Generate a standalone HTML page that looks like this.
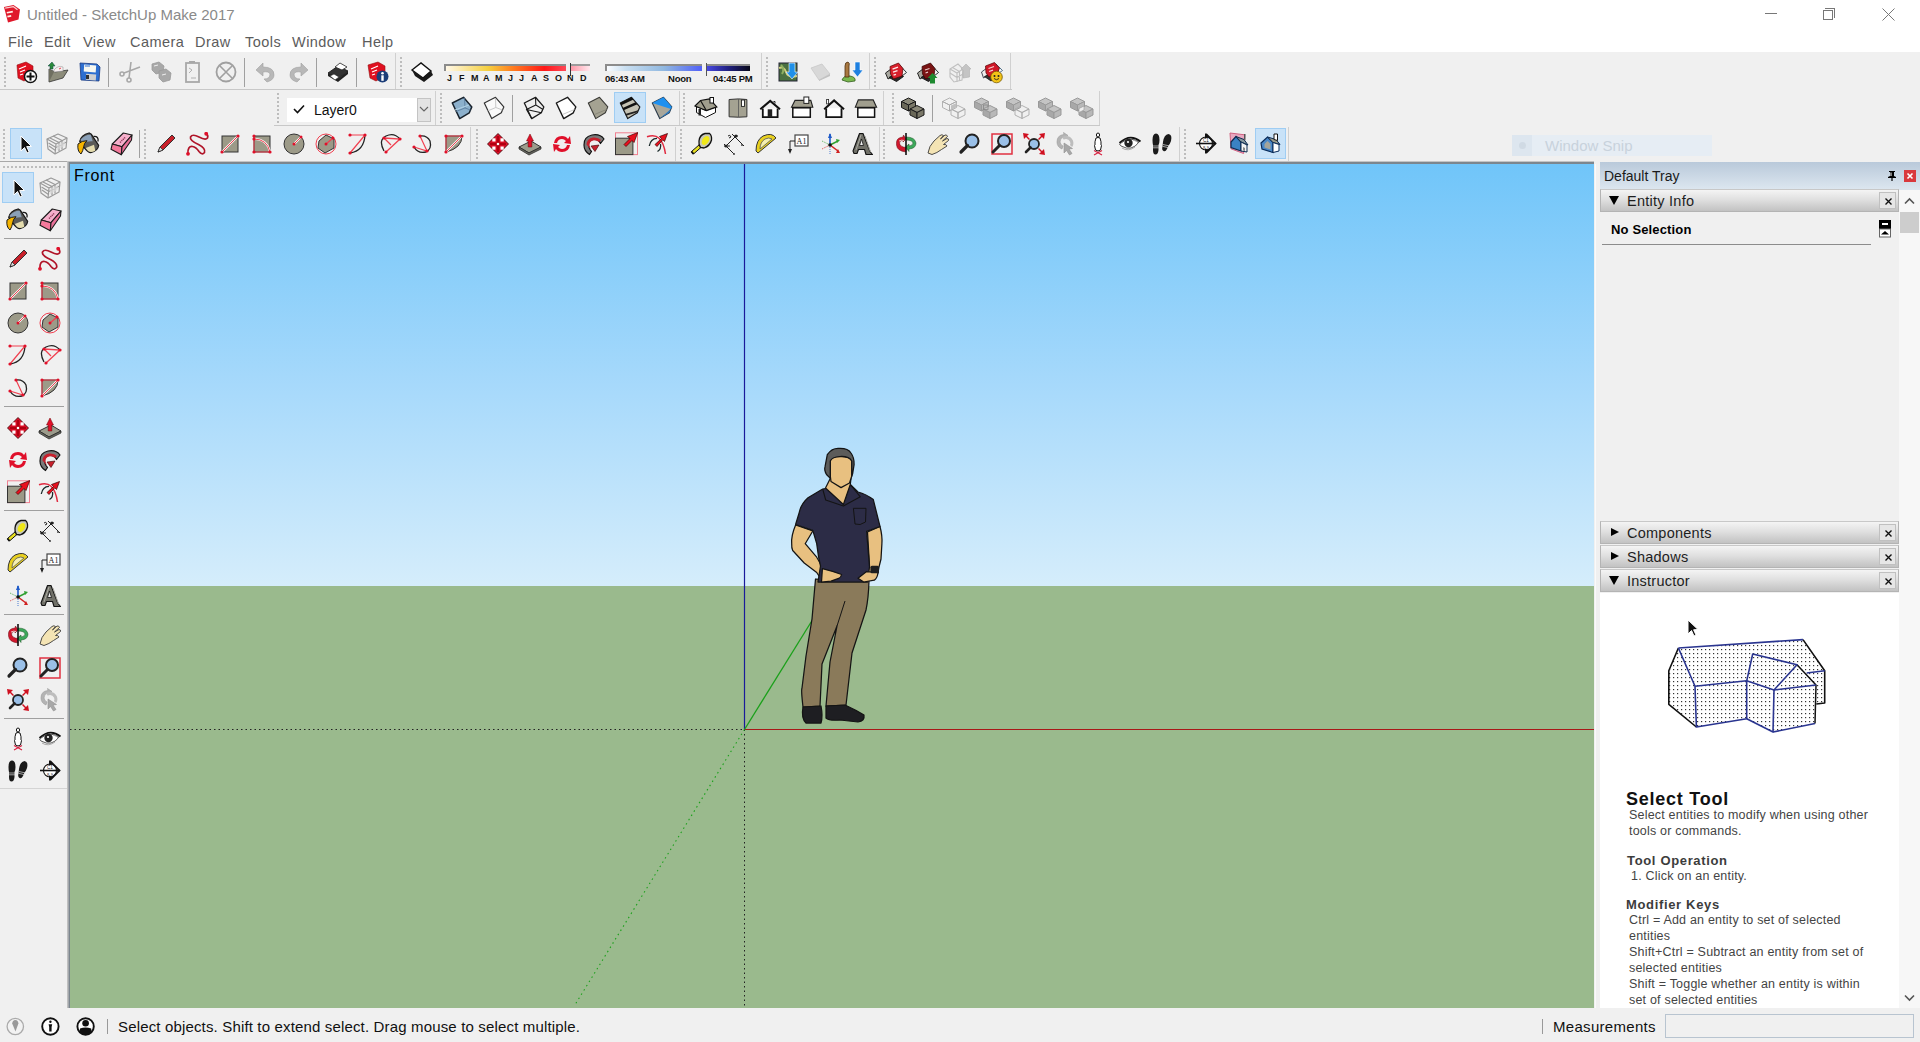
<!DOCTYPE html>
<html><head><meta charset="utf-8">
<style>
*{margin:0;padding:0;box-sizing:border-box}
html,body{width:1920px;height:1042px;overflow:hidden;background:#f0f0f0;font-family:"Liberation Sans",sans-serif;position:relative}
.a{position:absolute}
.t{position:absolute;white-space:nowrap;line-height:1}
.menu{font-size:14.5px;letter-spacing:0.45px;color:#5c5c5c;top:35px}
.ph{position:absolute;left:1600px;width:299px;height:23px;margin-top:-1px;background:linear-gradient(#f4f4f4,#e0e0e0 45%,#c2c2c2);border:1px solid #b4b4b4;border-top-color:#c8c8c8}
.ph .tri{position:absolute;left:8px;top:6px;width:0;height:0}
.ph .down{border-left:5px solid transparent;border-right:5px solid transparent;border-top:9px solid #000}
.ph .rt{left:10px;top:6px;border-top:4.5px solid transparent;border-bottom:4.5px solid transparent;border-left:8px solid #000}
.ph .lbl{position:absolute;left:26px;top:4px;font-size:14.5px;letter-spacing:0.25px;color:#1e1e1e;line-height:1}
.ph .x{position:absolute;left:278px;top:2px;width:17px;height:17px;border:1px solid #c0c0c0;background:#e6e6e6}
.selx{}
.ins{position:absolute;white-space:nowrap;line-height:1;font-size:12.5px;letter-spacing:0.2px;color:#444}
.insh{position:absolute;white-space:nowrap;line-height:1;font-size:13px;letter-spacing:0.66px;font-weight:bold;color:#3c3c3c}
</style></head><body>
<div class="a" style="left:0;top:0;width:1920px;height:52px;background:#fff"></div>
<svg class="a" style="left:3px;top:4px" width="18" height="20" viewBox="0 0 18 20"><path d="M1 3 L10.5 1 L17 5.5 L15.5 15.5 L5 18.5 Z" fill="#e0182a"/><path d="M2.2 4.2 L10.3 2.6 L14.5 5.8" fill="none" stroke="#f8d0d0" stroke-width="1.3"/><path d="M3.8 8.8 L9.8 7.6 M4.4 12.6 L8.2 11.9" stroke="#fff0e8" stroke-width="1.6"/></svg>
<div class="t" style="left:27px;top:7px;font-size:15px;color:#8a8a8a">Untitled - SketchUp Make 2017</div>
<div class="a" style="left:1765px;top:13px;width:12px;height:1px;background:#777"></div>
<div class="a" style="left:1823px;top:10px;width:10px;height:10px;border:1px solid #777"></div>
<div class="a" style="left:1825px;top:8px;width:10px;height:10px;border-top:1px solid #777;border-right:1px solid #777"></div>
<svg class="a" style="left:1882px;top:8px" width="13" height="13"><path d="M0.5 0.5L12.5 12.5M12.5 0.5L0.5 12.5" stroke="#777" stroke-width="1"/></svg>
<div class="t menu" style="left:8px">File</div>
<div class="t menu" style="left:44px">Edit</div>
<div class="t menu" style="left:83px">View</div>
<div class="t menu" style="left:130px">Camera</div>
<div class="t menu" style="left:195px">Draw</div>
<div class="t menu" style="left:245px">Tools</div>
<div class="t menu" style="left:292px">Window</div>
<div class="t menu" style="left:362px">Help</div>

<div class="a" style="left:4px;top:57px;width:2px;height:31px;background:repeating-linear-gradient(#bdbdbd 0 2px,transparent 2px 4px)"></div>
<svg class="a" style="left:14.0px;top:60.0px" width="24" height="24" viewBox="0 0 24 24"><path d="M3 5 L12 2 L19 6 L19 16 L10 21 L4 18 Z" fill="#e01020" stroke="#901010" stroke-width="0.6"/><path d="M5 9 L12 6 M6 12 L11 10 M6 15 L9 14" stroke="#fff" stroke-width="1.3"/><circle cx="16.5" cy="16.5" r="6" fill="#fff" stroke="#111" stroke-width="1.5"/><path d="M16.5 12.5 L16.5 20.5 M12.5 16.5 L20.5 16.5" stroke="#111" stroke-width="2"/></svg>
<svg class="a" style="left:46.0px;top:60.0px" width="24" height="24" viewBox="0 0 24 24"><path d="M3 9 L3 22 L17 18 L22 10 L9 12 Z" fill="#8c8c7a" stroke="#333" stroke-width="0.8"/><path d="M3 9 L3 22 L8 12" fill="#6f6f60"/><path d="M8 10 Q12 5 17 7 L17 11 L8 12Z" fill="#f8f0f0" stroke="#999" stroke-width="0.6"/><path d="M13 9 L15 8" stroke="#e04050" stroke-width="1"/><path d="M2 6 L6 2 L9 6 L7 6 L7 9 L4 9 L4 6 Z" fill="#2a8a3a" stroke="#144" stroke-width="0.5"/></svg>
<svg class="a" style="left:78.0px;top:60.0px" width="24" height="24" viewBox="0 0 24 24"><path d="M2 3 L19 4 L22 7 L21 21 L3 20 Z" fill="#2e6fd0" stroke="#1a3a80" stroke-width="0.8"/><rect x="6" y="5" width="12" height="7" fill="#f8f8f0" transform="rotate(4 12 8)"/><path d="M7 6 L12 6" stroke="#2e6fd0" stroke-width="1"/><rect x="8" y="14" width="10" height="6" fill="#d0d0d0" transform="rotate(4 12 17)"/><rect x="8" y="15" width="3" height="4" fill="#333"/></svg>
<div class="a" style="left:108px;top:58px;width:1px;height:29px;background:#a0a0a0"></div>
<svg class="a" style="left:118.0px;top:60.0px" width="24" height="24" viewBox="0 0 24 24"><g stroke="#a8a8a8" stroke-width="1.6" fill="none"><circle cx="4" cy="14" r="2"/><circle cx="11" cy="20" r="2"/><path d="M6 13 L22 7 M11 18 L13 2"/></g></svg>
<svg class="a" style="left:150.0px;top:60.0px" width="24" height="24" viewBox="0 0 24 24"><path d="M2 4 L9 2 L14 6 L13 12 L6 14 L2 10Z" fill="#a8a8a8" stroke="#999" stroke-width="0.8"/><path d="M9 11 L16 9 L21 13 L20 20 L13 22 L9 18Z" fill="#a8a8a8" stroke="#999" stroke-width="0.8"/><path d="M4 6 L8 5 M12 15 L16 14" stroke="#eee" stroke-width="1"/></svg>
<svg class="a" style="left:181.0px;top:60.0px" width="24" height="24" viewBox="0 0 24 24"><rect x="5" y="3" width="13" height="19" fill="#f0f0f0" stroke="#a8a8a8" stroke-width="1.8"/><path d="M8 2 L14 2" stroke="#a8a8a8" stroke-width="2"/><path d="M8 8 L11 10 L8 13" fill="none" stroke="#b0b0b0" stroke-width="1"/><path d="M10 18 L15 18" stroke="#b0b0b0" stroke-width="1"/></svg>
<svg class="a" style="left:214.0px;top:60.0px" width="24" height="24" viewBox="0 0 24 24"><circle cx="12" cy="12" r="9.5" fill="none" stroke="#a0a0a0" stroke-width="1.8"/><path d="M5.5 5.5 L18.5 18.5 M18.5 5.5 L5.5 18.5" stroke="#a0a0a0" stroke-width="1.6"/></svg>
<div class="a" style="left:244px;top:58px;width:1px;height:29px;background:#a0a0a0"></div>
<svg class="a" style="left:254.0px;top:60.0px" width="24" height="24" viewBox="0 0 24 24"><path d="M2 10 L9 3 L9 7 Q20 7 20 15 Q20 20 13 22 L10 19 Q16 19 16 14 Q15 11 9 12 L9 16 Z" fill="#b8b8b8" stroke="#a0a0a0" stroke-width="0.6"/></svg>
<svg class="a" style="left:286.0px;top:60.0px" width="24" height="24" viewBox="0 0 24 24"><path d="M22 10 L15 3 L15 7 Q4 7 4 15 Q4 20 11 22 L14 19 Q8 19 8 14 Q9 11 15 12 L15 16 Z" fill="#b8b8b8" stroke="#a0a0a0" stroke-width="0.6"/></svg>
<div class="a" style="left:316px;top:58px;width:1px;height:29px;background:#a0a0a0"></div>
<svg class="a" style="left:326.0px;top:60.0px" width="24" height="24" viewBox="0 0 24 24"><path d="M2 13 L12 6 L22 11 L12 19 Z" fill="#333" stroke="#111" stroke-width="0.8"/><path d="M2 13 L2 16 L12 22 L22 14 L22 11 L12 19Z" fill="#222"/><path d="M9 7 L14 3 L21 7 L16 10 Z" fill="#fff" stroke="#222" stroke-width="0.8"/><path d="M4 16 L8 14 L13 17 L9 20 Z" fill="#fff" stroke="#222" stroke-width="0.6"/></svg>
<div class="a" style="left:356px;top:58px;width:1px;height:29px;background:#a0a0a0"></div>
<svg class="a" style="left:366.0px;top:60.0px" width="24" height="24" viewBox="0 0 24 24"><path d="M2 5 L12 2 L19 6 L19 16 L10 21 L4 18 Z" fill="#e01020" stroke="#901010" stroke-width="0.6"/><path d="M5 9 L12 6 M6 12 L11 10 M6 15 L9 14" stroke="#fff" stroke-width="1.3"/><circle cx="16.5" cy="16.5" r="6" fill="#1c3e78"/><circle cx="16.5" cy="13.3" r="1.3" fill="#fff"/><rect x="15.3" y="15.3" width="2.4" height="5.5" fill="#fff"/></svg>
<div class="a" style="left:395px;top:53px;width:1px;height:36px;background:#d0d0d0"></div>
<div class="a" style="left:400px;top:57px;width:2px;height:31px;background:repeating-linear-gradient(#bdbdbd 0 2px,transparent 2px 4px)"></div>
<svg class="a" style="left:410.0px;top:60.0px" width="24" height="24" viewBox="0 0 24 24"><path d="M2 10 L11 3 L21 11 L13 18 Z" fill="#fff" stroke="#111" stroke-width="1.4"/><path d="M2 10 L13 18 L21 11 L23 15 L14 22 L5 16 Z" fill="#1a1a1a"/></svg>
<div class="a" style="left:444px;top:64px;width:122px;height:7px;border-top:2px solid #8c8c8c;border-left:2px solid #8c8c8c;background:linear-gradient(90deg,#fff8e8,#f5d040 35%,#ff8020 55%,#ff1818 82%,#ff4858)"></div>
<div class="a" style="left:570px;top:63px;width:1px;height:13px;background:#333"></div>
<div class="a" style="left:571px;top:64px;width:19px;height:7px;border-top:2px solid #9c9c9c;background:linear-gradient(90deg,#ff98a8,#ffe8ee)"></div>
<div class="t" style="left:447px;top:74px;font-size:9px;font-weight:bold;color:#111">J</div>
<div class="t" style="left:459px;top:74px;font-size:9px;font-weight:bold;color:#111">F</div>
<div class="t" style="left:471px;top:74px;font-size:9px;font-weight:bold;color:#111">M</div>
<div class="t" style="left:483px;top:74px;font-size:9px;font-weight:bold;color:#111">A</div>
<div class="t" style="left:495px;top:74px;font-size:9px;font-weight:bold;color:#111">M</div>
<div class="t" style="left:508px;top:74px;font-size:9px;font-weight:bold;color:#111">J</div>
<div class="t" style="left:519px;top:74px;font-size:9px;font-weight:bold;color:#111">J</div>
<div class="t" style="left:531px;top:74px;font-size:9px;font-weight:bold;color:#111">A</div>
<div class="t" style="left:543px;top:74px;font-size:9px;font-weight:bold;color:#111">S</div>
<div class="t" style="left:555px;top:74px;font-size:9px;font-weight:bold;color:#111">O</div>
<div class="t" style="left:567px;top:74px;font-size:9px;font-weight:bold;color:#111">N</div>
<div class="t" style="left:580px;top:74px;font-size:9px;font-weight:bold;color:#111">D</div>
<div class="a" style="left:605px;top:64px;width:97px;height:7px;border-top:2px solid #8c8c8c;border-left:2px solid #8c8c8c;background:linear-gradient(90deg,#fafcff,#c8def0 20%,#90b8e0 60%,#5060f8)"></div>
<div class="a" style="left:706px;top:63px;width:1px;height:13px;background:#555"></div>
<div class="a" style="left:707px;top:64px;width:43px;height:7px;border-top:2px solid #8c8c8c;background:linear-gradient(90deg,#4848e0,#202080 50%,#080818)"></div>
<div class="t" style="left:605px;top:74px;font-size:9.5px;font-weight:bold;letter-spacing:-0.2px;color:#111">06:43 AM</div>
<div class="t" style="left:668px;top:74px;font-size:9.5px;font-weight:bold;letter-spacing:-0.2px;color:#111">Noon</div>
<div class="t" style="left:713px;top:74px;font-size:9.5px;font-weight:bold;letter-spacing:-0.2px;color:#111">04:45 PM</div>
<div class="a" style="left:761px;top:53px;width:1px;height:36px;background:#d0d0d0"></div>
<div class="a" style="left:766px;top:57px;width:2px;height:31px;background:repeating-linear-gradient(#bdbdbd 0 2px,transparent 2px 4px)"></div>
<svg class="a" style="left:776.0px;top:60.0px" width="24" height="24" viewBox="0 0 24 24"><rect x="3" y="3" width="18" height="18" fill="#4a7040" stroke="#223" stroke-width="1"/><path d="M3 8 Q8 6 10 12 Q12 18 21 16" fill="none" stroke="#d0d080" stroke-width="2"/><path d="M5 5 Q9 9 6 14" fill="none" stroke="#90b060" stroke-width="2"/><path d="M13 3 L19 3 L19 12 L22 12 L16 19 L10 12 L13 12Z" fill="#2090e8" stroke="#fff" stroke-width="0.6"/></svg>
<svg class="a" style="left:808.0px;top:60.0px" width="24" height="24" viewBox="0 0 24 24"><path d="M3 8 L14 4 L22 14 L11 20 Z" fill="#d8d8d8" stroke="#c8c8c8" stroke-width="0.8"/><path d="M11 20 L22 14 L22 16 L11 21Z" fill="#c0c0c0"/></svg>
<svg class="a" style="left:840.0px;top:60.0px" width="24" height="24" viewBox="0 0 24 24"><path d="M2 20 Q4 15 10 16 Q16 17 15 21 L8 22 Z" fill="#7ab850" stroke="#356020" stroke-width="0.8"/><path d="M5 6 Q5 2 8 2 Q10 3 9 6 L9 17 L5 17 Z" fill="#a87840" stroke="#503010" stroke-width="0.8"/><path d="M15 2 L20 2 L20 10 L23 10 L17.5 17 L12 10 L15 10Z" fill="#1e80e0" stroke="#fff" stroke-width="0.6"/></svg>
<div class="a" style="left:869px;top:53px;width:1px;height:36px;background:#d0d0d0"></div>
<div class="a" style="left:874px;top:57px;width:2px;height:31px;background:repeating-linear-gradient(#bdbdbd 0 2px,transparent 2px 4px)"></div>
<svg class="a" style="left:884.0px;top:60.0px" width="24" height="24" viewBox="0 0 24 24"><path d="M1.5 13 L7 9 L9 16 L4 19 Z" fill="#a8a8a0" stroke="#111" stroke-width="0.9"/><path d="M15 4.5 L22.5 12.5 L18 16 Z" fill="#f4f4f4" stroke="#122" stroke-width="0.9"/><path d="M5 17.5 L12.5 21.5 L19.5 16.5 L12 13.5Z" fill="#2a2a2a" stroke="#111" stroke-width="0.9"/><path d="M6 6.5 L14.5 3 L19 8.5 L18 16 L9.5 19 L6.5 14Z" fill="#d8202c" stroke="#500" stroke-width="0.7"/><path d="M8.5 9.2 L14 7.2 M9 12.2 L13.5 10.7 M9.5 15.2 L12 14.3" stroke="#ffe8e8" stroke-width="1.4"/></svg>
<svg class="a" style="left:916.0px;top:60.0px" width="24" height="24" viewBox="0 0 24 24"><path d="M1.5 13 L7 9 L9 16 L4 19 Z" fill="#a8a8a0" stroke="#111" stroke-width="0.9"/><path d="M15 4.5 L22.5 12.5 L18 16 Z" fill="#f4f4f4" stroke="#122" stroke-width="0.9"/><path d="M5 17.5 L12.5 21.5 L19.5 16.5 L12 13.5Z" fill="#2a2a2a" stroke="#111" stroke-width="0.9"/><path d="M6 6.5 L14.5 3 L19 8.5 L18 16 L9.5 19 L6.5 14Z" fill="#7a1414" stroke="#300" stroke-width="0.7"/><path d="M9 10 L13.5 8.5 M9.5 13 L12 12.2" stroke="#e8c8c8" stroke-width="1.3"/><path d="M16.5 13 L21.5 18 L19 18 L19 23.5 L14 23.5 L14 18 L11.5 18Z" fill="#1e8a30"/></svg>
<svg class="a" style="left:948.0px;top:60.0px" width="24" height="24" viewBox="0 0 24 24"><g fill="none" stroke="#c0c0c0" stroke-width="1.1"><path d="M2 9 L10 4 L15 9 L14 20 L6 22 L2 17Z"/><path d="M2 9 L9 13 L15 9 M9 13 L9 22 M4.5 7.5 L11.5 11.5 L11.5 21 M2 13 L9 17.5 L15 14"/></g><path d="M13 9 L18 4 L23 9 L21.5 9 L21.5 17 L15 18 L15 10 Z" fill="#c4c4c4" stroke="#b0b0b0" stroke-width="0.6"/></svg>
<svg class="a" style="left:980.0px;top:60.0px" width="24" height="24" viewBox="0 0 24 24"><path d="M1.5 12 L7 8 L8.5 15 L3.5 18 Z" fill="#eee" stroke="#223" stroke-width="0.8"/><path d="M16 4 L22.5 10.5 L19 13 Z" fill="#f4f4f4" stroke="#2a5070" stroke-width="0.8"/><path d="M4.5 16.5 L11 21 L15 18 L10 14Z" fill="#333" stroke="#111" stroke-width="0.8"/><path d="M5.5 6 L14.5 2.5 L19.5 8 L17 14 L9 17 L6 13Z" fill="#d01828" stroke="#500" stroke-width="0.7"/><path d="M8.5 8.5 L14 6.5 M9 11.5 L13 10.2" stroke="#f8d0d0" stroke-width="1.3"/><circle cx="16.5" cy="17" r="5.8" fill="#f2c418" stroke="#7a5a00" stroke-width="0.8"/><circle cx="14.5" cy="16" r="1" fill="#222"/><circle cx="18.5" cy="16" r="1" fill="#222"/><path d="M14 18.5 Q16.5 21 19 18.5" fill="none" stroke="#222" stroke-width="0.9"/></svg>
<div class="a" style="left:1010px;top:53px;width:1px;height:36px;background:#d0d0d0"></div>
<div class="a" style="left:0px;top:89px;width:1012px;height:1px;background:#c8c8c8"></div>
<div class="a" style="left:277px;top:93px;width:2px;height:31px;background:repeating-linear-gradient(#bdbdbd 0 2px,transparent 2px 4px)"></div>
<div class="a" style="left:287px;top:98px;width:130px;height:24px;background:#fff"></div>
<svg class="a" style="left:293px;top:104px" width="12" height="10"><path d="M1 5 L4.5 8.5 L11 1.5" fill="none" stroke="#111" stroke-width="1.6"/></svg>
<div class="t" style="left:314px;top:103px;font-size:14px;color:#111">Layer0</div>
<div class="a" style="left:417px;top:98px;width:14px;height:24px;background:#e4e4e4;border:1px solid #c4c4c4"></div>
<svg class="a" style="left:419px;top:106px" width="10" height="7"><path d="M1 1 L5 5 L9 1" fill="none" stroke="#666" stroke-width="1.1"/></svg>
<div class="a" style="left:435px;top:91px;width:1px;height:34px;background:#d0d0d0"></div>
<div class="a" style="left:440px;top:93px;width:2px;height:31px;background:repeating-linear-gradient(#bdbdbd 0 2px,transparent 2px 4px)"></div>
<svg class="a" style="left:450.0px;top:96.0px" width="24" height="24" viewBox="0 0 24 24"><path d="M2.3 7 L13.5 1.3 L21.8 10.9 L19.3 16.8 L9.7 22.6 Z" fill="#8cb0cc" stroke="#18222c" stroke-width="1.5" stroke-linejoin="round"/><path d="M14.5 1.8 L15 12 L20.5 14 M15 12 L6 15.5" fill="none" stroke="#56789a" stroke-width="0.8"/><path d="M5 14 L19 9" stroke="#b0d0e4" stroke-width="1.2"/></svg>
<svg class="a" style="left:482.0px;top:96.0px" width="24" height="24" viewBox="0 0 24 24"><path d="M2.3 7 L13.5 1.3 L21.8 10.9 L19.3 16.8 L9.7 22.6 Z" fill="#fafafa" stroke="#333" stroke-width="1.2" stroke-linejoin="round"/><path d="M13.5 2 L13.8 11.5 L20.5 14 M13.8 11.5 L5.5 15" fill="none" stroke="#bbb" stroke-width="0.8"/></svg>
<div class="a" style="left:512px;top:95px;width:1px;height:27px;background:#a0a0a0"></div>
<div class="a" style="left:614px;top:92px;width:32px;height:31px;background:#c8e2f8;border:1px solid #9fcdf3"></div>
<svg class="a" style="left:522.0px;top:96.0px" width="24" height="24" viewBox="0 0 24 24"><path d="M2.3 7 L13.5 1.3 L21.8 10.9 L19.3 16.8 L9.7 22.6 Z" fill="none" stroke="#1a1a1a" stroke-width="1.3" stroke-linejoin="round"/><path d="M13.5 1.3 L13.8 9 L21 13.5 M13.8 9 L4.5 13.5 L9.7 22.6 M4.5 13.5 L19.3 16.8" fill="none" stroke="#1a1a1a" stroke-width="1.1"/></svg>
<svg class="a" style="left:554.0px;top:96.0px" width="24" height="24" viewBox="0 0 24 24"><path d="M2.3 7 L13.5 1.3 L21.8 10.9 L19.3 16.8 L9.7 22.6 Z" fill="#fff" stroke="#1a1a1a" stroke-width="1.4" stroke-linejoin="round"/><path d="M8.5 18.5 L20.5 13.5" fill="none" stroke="#bbb" stroke-width="0.8"/></svg>
<svg class="a" style="left:586.0px;top:96.0px" width="24" height="24" viewBox="0 0 24 24"><path d="M2.3 7 L13.5 1.3 L21.8 10.9 L19.3 16.8 L9.7 22.6 Z" fill="#a4a292" stroke="#3a3a36" stroke-width="1.1" stroke-linejoin="round"/><path d="M8.5 18.5 L20.5 13.5" fill="none" stroke="#8a887a" stroke-width="1"/></svg>
<svg class="a" style="left:618.0px;top:96.0px" width="24" height="24" viewBox="0 0 24 24"><path d="M2.3 7 L13.5 1.3 L21.8 10.9 L19.3 16.8 L9.7 22.6 Z" fill="#c4c2b4" stroke="#1a1a1a" stroke-width="1.2" stroke-linejoin="round"/><path d="M2.3 7 L13.5 1.3 L15.5 3.6 L3.3 9.2Z" fill="#111"/><path d="M4.6 12 L17.6 6.2 L19.4 8.3 L5.6 14.2Z" fill="#111"/><path d="M7.2 18 L20.2 14.3 L19.5 16.2 L8 19.8Z" fill="#222"/></svg>
<svg class="a" style="left:650.0px;top:96.0px" width="24" height="24" viewBox="0 0 24 24"><path d="M2.3 7 L13.5 1.3 L21.8 10.9 L19.3 16.8 L9.7 22.6 Z" fill="#a8a69a" stroke="#2a3a4a" stroke-width="1.1" stroke-linejoin="round"/><path d="M2.3 7 L13.5 1.3 L21.8 10.9 L21 13 Z" fill="#1e90f0"/><path d="M21.8 10.9 L19.3 16.8 L9.7 22.6 L21 13Z" fill="#2a78c0"/></svg>
<div class="a" style="left:679px;top:91px;width:1px;height:34px;background:#d0d0d0"></div>
<div class="a" style="left:683px;top:93px;width:2px;height:31px;background:repeating-linear-gradient(#bdbdbd 0 2px,transparent 2px 4px)"></div>
<svg class="a" style="left:694.0px;top:96.0px" width="24" height="24" viewBox="0 0 24 24"><path d="M2.5 10.5 L2.5 16.5 L11.5 21.5 L21.5 16.5 L21.5 11 L12.3 14.5 Z" fill="#fff" stroke="#111" stroke-width="1"/><path d="M1 10 L6.5 4.5 L15.5 3 L22.8 10.9 L12.3 14.5 Z" fill="#a09e8e" stroke="#111" stroke-width="1.2"/><path d="M6.5 4.5 L12.3 14.5" stroke="#111" stroke-width="1.2"/><rect x="16" y="1.5" width="3.5" height="5.5" fill="#fff" stroke="#111" stroke-width="1"/><rect x="4.5" y="13" width="2.5" height="6.5" fill="#222"/></svg>
<svg class="a" style="left:726.0px;top:96.0px" width="24" height="24" viewBox="0 0 24 24"><path d="M3.1 3.5 L12.5 2.9 L20.9 3.5 L20.9 20.8 L12.5 21.2 L3.1 20.8 Z" fill="#a4a292" stroke="#333" stroke-width="1"/><path d="M12.5 2.9 L12.5 21.2" stroke="#555" stroke-width="0.8"/><rect x="15.5" y="4" width="3" height="6.4" fill="#fff" stroke="#222" stroke-width="0.9"/></svg>
<svg class="a" style="left:758.0px;top:96.0px" width="24" height="24" viewBox="0 0 24 24"><path d="M2.3 13.3 L12.2 4.9 L22 13.3" fill="none" stroke="#111" stroke-width="2"/><path d="M4.8 12.5 L4.8 21.2 L19.6 21.2 L19.6 12.5" fill="#fff" stroke="#111" stroke-width="1.8"/><rect x="9.7" y="13.3" width="4.5" height="7.9" fill="#222"/><path d="M15.5 5.5 L17 5.5 L17 7.5" fill="none" stroke="#222" stroke-width="1"/></svg>
<svg class="a" style="left:790.0px;top:96.0px" width="24" height="24" viewBox="0 0 24 24"><path d="M1.5 11.3 L5 4.4 L20.8 4.4 L22.8 11.3 Z" fill="#a09e8e" stroke="#222" stroke-width="1.1"/><rect x="13.9" y="1" width="4.9" height="6.4" fill="#fff" stroke="#222" stroke-width="1"/><rect x="2.8" y="11.8" width="17.5" height="9.4" fill="#fff" stroke="#111" stroke-width="1.5"/></svg>
<svg class="a" style="left:822.0px;top:96.0px" width="24" height="24" viewBox="0 0 24 24"><path d="M2.2 13.3 L12.1 4.4 L22 13.3" fill="none" stroke="#111" stroke-width="2"/><path d="M4.2 12.3 L4.2 21.2 L19.5 21.2 L19.5 12.3" fill="#fff" stroke="#111" stroke-width="1.8"/><rect x="4.6" y="3.4" width="2" height="4.5" fill="#fff" stroke="#222" stroke-width="0.8"/></svg>
<svg class="a" style="left:854.0px;top:96.0px" width="24" height="24" viewBox="0 0 24 24"><path d="M1.3 11.3 L4.3 3.9 L19.2 3.9 L22.6 11.3 Z" fill="#a09e8e" stroke="#222" stroke-width="1.1"/><rect x="3.8" y="11.8" width="16.8" height="9.4" fill="#fff" stroke="#111" stroke-width="1.5"/></svg>
<div class="a" style="left:883px;top:91px;width:1px;height:34px;background:#d0d0d0"></div>
<div class="a" style="left:892px;top:93px;width:2px;height:31px;background:repeating-linear-gradient(#bdbdbd 0 2px,transparent 2px 4px)"></div>
<svg class="a" style="left:901.0px;top:96.0px" width="24" height="24" viewBox="0 0 24 24"><path d="M0.5 5.5 L7.5 2.0 L14.5 5.5 L7.5 9.0 Z" fill="#8a8878" stroke="#1a1a1a" stroke-width="1" stroke-linejoin="round"/><path d="M0.5 5.5 L7.5 9.0 L7.5 15.0 L0.5 11.5 Z" fill="#6a6858" stroke="#1a1a1a" stroke-width="1" stroke-linejoin="round"/><path d="M7.5 9.0 L14.5 5.5 L14.5 11.5 L7.5 15.0 Z" fill="#7a7868" stroke="#1a1a1a" stroke-width="1" stroke-linejoin="round"/><path d="M9.0 13 L16.0 9.5 L23.0 13 L16.0 16.5 Z" fill="#8a8878" stroke="#1a1a1a" stroke-width="1" stroke-linejoin="round"/><path d="M9.0 13 L16.0 16.5 L16.0 22.5 L9.0 19 Z" fill="#6a6858" stroke="#1a1a1a" stroke-width="1" stroke-linejoin="round"/><path d="M16.0 16.5 L23.0 13 L23.0 19 L16.0 22.5 Z" fill="#7a7868" stroke="#1a1a1a" stroke-width="1" stroke-linejoin="round"/></svg>
<div class="a" style="left:932px;top:95px;width:1px;height:27px;background:#a0a0a0"></div>
<svg class="a" style="left:942.0px;top:96.0px" width="24" height="24" viewBox="0 0 24 24"><path d="M0.5 5.5 L7.5 2.0 L14.5 5.5 L7.5 9.0 Z" fill="none" stroke="#aaa" stroke-width="0.9" stroke-linejoin="round"/><path d="M0.5 5.5 L7.5 9.0 L7.5 15.0 L0.5 11.5 Z" fill="none" stroke="#aaa" stroke-width="0.9" stroke-linejoin="round"/><path d="M7.5 9.0 L14.5 5.5 L14.5 11.5 L7.5 15.0 Z" fill="none" stroke="#aaa" stroke-width="0.9" stroke-linejoin="round"/><path d="M9.0 13 L16.0 9.5 L23.0 13 L16.0 16.5 Z" fill="none" stroke="#aaa" stroke-width="0.9" stroke-linejoin="round"/><path d="M9.0 13 L16.0 16.5 L16.0 22.5 L9.0 19 Z" fill="none" stroke="#aaa" stroke-width="0.9" stroke-linejoin="round"/><path d="M16.0 16.5 L23.0 13 L23.0 19 L16.0 22.5 Z" fill="none" stroke="#aaa" stroke-width="0.9" stroke-linejoin="round"/><path d="M9 9.5 L14.5 7 L14.5 11 L9 14Z" fill="#c0c0c0"/></svg>
<svg class="a" style="left:974.0px;top:96.0px" width="24" height="24" viewBox="0 0 24 24"><path d="M0.5 5.5 L7.5 2.0 L14.5 5.5 L7.5 9.0 Z" fill="#c4c4c4" stroke="#999" stroke-width="1" stroke-linejoin="round"/><path d="M0.5 5.5 L7.5 9.0 L7.5 15.0 L0.5 11.5 Z" fill="#a8a8a8" stroke="#999" stroke-width="1" stroke-linejoin="round"/><path d="M7.5 9.0 L14.5 5.5 L14.5 11.5 L7.5 15.0 Z" fill="#b8b8b8" stroke="#999" stroke-width="1" stroke-linejoin="round"/><path d="M9.0 13 L16.0 9.5 L23.0 13 L16.0 16.5 Z" fill="#c4c4c4" stroke="#999" stroke-width="1" stroke-linejoin="round"/><path d="M9.0 13 L16.0 16.5 L16.0 22.5 L9.0 19 Z" fill="#a8a8a8" stroke="#999" stroke-width="1" stroke-linejoin="round"/><path d="M16.0 16.5 L23.0 13 L23.0 19 L16.0 22.5 Z" fill="#b8b8b8" stroke="#999" stroke-width="1" stroke-linejoin="round"/><rect x="9.5" y="9" width="4.5" height="4.5" fill="none" stroke="#888" stroke-width="0.8"/></svg>
<svg class="a" style="left:1006.0px;top:96.0px" width="24" height="24" viewBox="0 0 24 24"><path d="M0.5 5.5 L7.5 2.0 L14.5 5.5 L7.5 9.0 Z" fill="#c4c4c4" stroke="#999" stroke-width="1" stroke-linejoin="round"/><path d="M0.5 5.5 L7.5 9.0 L7.5 15.0 L0.5 11.5 Z" fill="#a8a8a8" stroke="#999" stroke-width="1" stroke-linejoin="round"/><path d="M7.5 9.0 L14.5 5.5 L14.5 11.5 L7.5 15.0 Z" fill="#b8b8b8" stroke="#999" stroke-width="1" stroke-linejoin="round"/><path d="M9.0 13 L16.0 9.5 L23.0 13 L16.0 16.5 Z" fill="none" stroke="#aaa" stroke-width="0.9" stroke-linejoin="round"/><path d="M9.0 13 L16.0 16.5 L16.0 22.5 L9.0 19 Z" fill="none" stroke="#aaa" stroke-width="0.9" stroke-linejoin="round"/><path d="M16.0 16.5 L23.0 13 L23.0 19 L16.0 22.5 Z" fill="none" stroke="#aaa" stroke-width="0.9" stroke-linejoin="round"/></svg>
<svg class="a" style="left:1038.0px;top:96.0px" width="24" height="24" viewBox="0 0 24 24"><path d="M0.5 5.5 L7.5 2.0 L14.5 5.5 L7.5 9.0 Z" fill="#c4c4c4" stroke="#999" stroke-width="1" stroke-linejoin="round"/><path d="M0.5 5.5 L7.5 9.0 L7.5 15.0 L0.5 11.5 Z" fill="#a8a8a8" stroke="#999" stroke-width="1" stroke-linejoin="round"/><path d="M7.5 9.0 L14.5 5.5 L14.5 11.5 L7.5 15.0 Z" fill="#b8b8b8" stroke="#999" stroke-width="1" stroke-linejoin="round"/><path d="M9.0 13 L16.0 9.5 L23.0 13 L16.0 16.5 Z" fill="#c4c4c4" stroke="#999" stroke-width="1" stroke-linejoin="round"/><path d="M9.0 13 L16.0 16.5 L16.0 22.5 L9.0 19 Z" fill="#a8a8a8" stroke="#999" stroke-width="1" stroke-linejoin="round"/><path d="M16.0 16.5 L23.0 13 L23.0 19 L16.0 22.5 Z" fill="#b8b8b8" stroke="#999" stroke-width="1" stroke-linejoin="round"/></svg>
<svg class="a" style="left:1070.0px;top:96.0px" width="24" height="24" viewBox="0 0 24 24"><path d="M0.5 5.5 L7.5 2.0 L14.5 5.5 L7.5 9.0 Z" fill="#c4c4c4" stroke="#999" stroke-width="1" stroke-linejoin="round"/><path d="M0.5 5.5 L7.5 9.0 L7.5 15.0 L0.5 11.5 Z" fill="#a8a8a8" stroke="#999" stroke-width="1" stroke-linejoin="round"/><path d="M7.5 9.0 L14.5 5.5 L14.5 11.5 L7.5 15.0 Z" fill="#b8b8b8" stroke="#999" stroke-width="1" stroke-linejoin="round"/><path d="M9.0 13 L16.0 9.5 L23.0 13 L16.0 16.5 Z" fill="#c4c4c4" stroke="#999" stroke-width="1" stroke-linejoin="round"/><path d="M9.0 13 L16.0 16.5 L16.0 22.5 L9.0 19 Z" fill="#a8a8a8" stroke="#999" stroke-width="1" stroke-linejoin="round"/><path d="M16.0 16.5 L23.0 13 L23.0 19 L16.0 22.5 Z" fill="#b8b8b8" stroke="#999" stroke-width="1" stroke-linejoin="round"/><path d="M9 12.5 L14 10 L14 14 L9 16.5Z" fill="#eee" stroke="#999" stroke-width="0.6"/></svg>
<div class="a" style="left:1099px;top:91px;width:1px;height:34px;background:#d0d0d0"></div>
<div class="a" style="left:274px;top:125px;width:826px;height:1px;background:#c8c8c8"></div>
<div class="a" style="left:3px;top:129px;width:2px;height:31px;background:repeating-linear-gradient(#bdbdbd 0 2px,transparent 2px 4px)"></div>
<div class="a" style="left:10px;top:128px;width:32px;height:31px;background:#c8e2f8;border:1px solid #9fcdf3"></div>
<svg class="a" style="left:13.0px;top:132.0px" width="24" height="24" viewBox="0 0 24 24"><path d="M8 4 L8 19 L11.5 15.5 L14 21 L16.2 20 L13.7 14.6 L18.5 14.5 Z" fill="#111" stroke="#fff" stroke-width="1"/></svg>
<svg class="a" style="left:45.0px;top:132.0px" width="24" height="24" viewBox="0 0 24 24"><g fill="none" stroke="#9a9a9a" stroke-width="1.2" stroke-linejoin="round"><path d="M2 7 L13 2 L22 6 L21 16 L10 22 L3 17 Z"/><path d="M2 7 L11 12 L22 6 M11 12 L10 22"/><path d="M5 6 L14 10.5 L14 19 M8 4 L17 8.5 L17 17.5 M3.5 11 L11 15.5 L21.5 10 M4 14 L10.5 18.5"/></g><path d="M12 13 L20 9 L19.5 14 L11.5 18.5 Z" fill="#d8d8d8" opacity="0.7"/></svg>
<svg class="a" style="left:77.0px;top:132.0px" width="24" height="24" viewBox="0 0 24 24"><path d="M12 1 Q4 3 2.7 9.3 L8 16.7 Q11 20.5 13.7 20.7 Q21 19 21.7 13.3 L14.3 2.3 Z" fill="#5a5a58" stroke="#1a1a1a" stroke-width="1.2"/><path d="M3.7 7.5 Q8 2.5 13.7 2.7 L15.7 9.3 Q10 9 5.3 11 Z" fill="#8aa0b8"/><path d="M8.7 16 L17 12.7 L18.3 18.7 Q14 21 11 19 Z" fill="#e4dcae"/><path d="M16.5 4.5 Q22 4 21 9.5" fill="none" stroke="#1a1a1a" stroke-width="1.3"/><path d="M1 12 Q5 8.5 10 8.7 Q7 11 6.7 14.7 Q6 19 4 22 Q0 19 1 12 Z" fill="#f5b400" stroke="#1a1a1a" stroke-width="1"/></svg>
<svg class="a" style="left:109.0px;top:132.0px" width="24" height="24" viewBox="0 0 24 24"><path d="M3.3 12 L14.3 1 L23 3 L13 14.7 Z" fill="#f6b0cc" stroke="#1a1a1a" stroke-width="1.1" stroke-linejoin="round"/><path d="M3.3 12 L13 14.7 L12.3 22.7 L2 17.3 Z" fill="#f47a9c" stroke="#1a1a1a" stroke-width="1.1" stroke-linejoin="round"/><path d="M13 14.7 L23 3 L22.5 8 L12.3 22.7 Z" fill="#e87098" stroke="#1a1a1a" stroke-width="1.1" stroke-linejoin="round"/><path d="M11 10.5 L16.5 5" stroke="#8a3050" stroke-width="1.4" stroke-dasharray="1.2 0.8"/></svg>
<div class="a" style="left:139px;top:130px;width:1px;height:28px;background:#a0a0a0"></div>
<div class="a" style="left:144px;top:129px;width:2px;height:31px;background:repeating-linear-gradient(#bdbdbd 0 2px,transparent 2px 4px)"></div>
<svg class="a" style="left:154.0px;top:132.0px" width="24" height="24" viewBox="0 0 24 24"><path d="M4 20 L6 15 L18 3 L21 6 L9 18 Z" fill="#c8202a" stroke="#333" stroke-width="1"/><path d="M4 20 L6 15 L9 18 Z" fill="#ddd" stroke="#333" stroke-width="0.8"/><path d="M4 20 L5 18.5 L5.5 19.5Z" fill="#111"/></svg>
<svg class="a" style="left:186.0px;top:132.0px" width="24" height="24" viewBox="0 0 24 24"><path d="M2 21.5 Q1.5 14 6.5 14.5 Q10 15 13 19.5 Q16 23.5 18.5 20.5 Q20 16.5 12.5 12.5 Q3.5 8.5 4.5 5 Q6.5 1.5 13 5 Q19.5 8.5 21.5 6 Q22.5 3.5 20.2 1.5" fill="none" stroke="#b01428" stroke-width="1.7"/><circle cx="2" cy="21.8" r="1.9" fill="#e0102a"/><circle cx="20.2" cy="1.8" r="1.9" fill="#e0102a"/></svg>
<svg class="a" style="left:218.0px;top:132.0px" width="24" height="24" viewBox="0 0 24 24"><rect x="4" y="4" width="16" height="16" fill="#9c9a88" stroke="#333" stroke-width="1"/><path d="M4 20 L20 4" stroke="#fff" stroke-width="2"/><path d="M4 20 L20 4" stroke="#f04050" stroke-width="1"/><circle cx="4" cy="20" r="1.6" fill="#e0102a"/><circle cx="20" cy="4" r="1.6" fill="#e0102a"/></svg>
<svg class="a" style="left:250.0px;top:132.0px" width="24" height="24" viewBox="0 0 24 24"><rect x="4" y="4" width="16" height="16" fill="#9c9a88" stroke="#333" stroke-width="1"/><path d="M4 7 Q17 7 20 20" fill="none" stroke="#fff" stroke-width="2"/><path d="M4 7 Q17 7 20 20" fill="none" stroke="#f04050" stroke-width="1"/><path d="M4 4 L4 20 L20 20" fill="none" stroke="#f04050" stroke-width="1"/><circle cx="4" cy="4" r="1.6" fill="#e0102a"/><circle cx="4" cy="7" r="1.6" fill="#e0102a"/><circle cx="4" cy="20" r="1.6" fill="#e0102a"/><circle cx="20" cy="20" r="1.6" fill="#e0102a"/></svg>
<svg class="a" style="left:282.0px;top:132.0px" width="24" height="24" viewBox="0 0 24 24"><circle cx="12" cy="12" r="10" fill="#9c9a88" stroke="#333" stroke-width="1"/><path d="M12 12 L19 5" stroke="#fff" stroke-width="2"/><path d="M12 12 L19 5" stroke="#f04050" stroke-width="1"/><circle cx="12" cy="12" r="1.5" fill="#e0102a"/><circle cx="19" cy="5" r="1.5" fill="#e0102a"/></svg>
<svg class="a" style="left:314.0px;top:132.0px" width="24" height="24" viewBox="0 0 24 24"><circle cx="12" cy="12" r="10" fill="none" stroke="#f04050" stroke-width="1"/><path d="M5 9 L12 3 L20 7 L20 16 L11 21 L4 16 Z" fill="#9c9a88" stroke="#333" stroke-width="1"/><path d="M12 12 L19 6" stroke="#f04050" stroke-width="1.2"/><circle cx="12" cy="12" r="1.5" fill="#e0102a"/><circle cx="19" cy="6" r="1.5" fill="#e0102a"/></svg>
<svg class="a" style="left:346.0px;top:132.0px" width="24" height="24" viewBox="0 0 24 24"><path d="M4 21 Q18 19 19 3" fill="none" stroke="#222" stroke-width="1.3"/><path d="M4 3 L19 3 L4 21" fill="none" stroke="#f04050" stroke-width="1.2"/><circle cx="4" cy="3" r="1.6" fill="#e0102a"/><circle cx="19" cy="3" r="1.6" fill="#e0102a"/><circle cx="4" cy="21" r="1.6" fill="#e0102a"/></svg>
<svg class="a" style="left:378.0px;top:132.0px" width="24" height="24" viewBox="0 0 24 24"><path d="M6 19 Q0 8 8 4 Q16 0 22 7" fill="none" stroke="#222" stroke-width="1.3"/><path d="M6 6 L22 7 L8 20 M6 6 L13 13" fill="none" stroke="#f04050" stroke-width="1.3"/><circle cx="6" cy="6" r="1.6" fill="#e0102a"/><circle cx="22" cy="7" r="1.6" fill="#e0102a"/><circle cx="8" cy="20" r="1.6" fill="#e0102a"/></svg>
<svg class="a" style="left:410.0px;top:132.0px" width="24" height="24" viewBox="0 0 24 24"><path d="M4 15 Q8 22 16 20 Q22 17 20 9 Q17 3 10 4" fill="none" stroke="#222" stroke-width="1.3"/><path d="M10 4 L17 19 L4 15" fill="none" stroke="#f04050" stroke-width="1.2"/><circle cx="10" cy="4" r="1.6" fill="#e0102a"/><circle cx="17" cy="19" r="1.6" fill="#e0102a"/><circle cx="4" cy="15" r="1.6" fill="#e0102a"/></svg>
<svg class="a" style="left:442.0px;top:132.0px" width="24" height="24" viewBox="0 0 24 24"><path d="M4 20 L4 4 L20 4 Q20 16 4 20 Z" fill="#9c9a88" stroke="#333" stroke-width="1"/><path d="M4 20 L20 4" stroke="#fff" stroke-width="2"/><path d="M4 20 L20 4 M4 4 L20 4 M4 4 L4 20" stroke="#f04050" stroke-width="1"/><circle cx="4" cy="4" r="1.6" fill="#e0102a"/><circle cx="20" cy="4" r="1.6" fill="#e0102a"/><circle cx="4" cy="20" r="1.6" fill="#e0102a"/></svg>
<div class="a" style="left:470px;top:127px;width:1px;height:34px;background:#d0d0d0"></div>
<div class="a" style="left:476px;top:129px;width:2px;height:31px;background:repeating-linear-gradient(#bdbdbd 0 2px,transparent 2px 4px)"></div>
<svg class="a" style="left:486.0px;top:132.0px" width="24" height="24" viewBox="0 0 24 24"><path d="M12 1.5 L22.5 12 L12 22.5 L1.5 12 Z" fill="#e0102a" stroke="#300" stroke-width="0.8"/><rect x="6.3" y="6.3" width="3.2" height="3.2" fill="#fff"/><rect x="14.5" y="6.3" width="3.2" height="3.2" fill="#fff"/><rect x="6.3" y="14.5" width="3.2" height="3.2" fill="#fff"/><rect x="14.5" y="14.5" width="3.2" height="3.2" fill="#fff"/><path d="M12 4 L12 20 M4 12 L20 12" stroke="#b00010" stroke-width="2.6"/><circle cx="12" cy="12" r="1.3" fill="#fff"/></svg>
<svg class="a" style="left:518.0px;top:132.0px" width="24" height="24" viewBox="0 0 24 24"><path d="M1 15 L13 9 L23 15 L11 21 Z" fill="#9c9c8c" stroke="#222" stroke-width="0.9"/><path d="M1 15 L1 17 L11 23 L23 17 L23 15 L11 21 Z" fill="#6a6a60" stroke="#222" stroke-width="0.7"/><path d="M12 2 L15.5 9 L13.8 9 L13.8 15 L10.2 15 L10.2 9 L8.5 9 Z" fill="#e0102a" stroke="#600" stroke-width="0.5"/></svg>
<svg class="a" style="left:550.0px;top:132.0px" width="24" height="24" viewBox="0 0 24 24"><path d="M4 11 Q5 4 12 4 Q16 4 18 7 L20 4 L21 12 L14 11 L16 9 Q14 7 12 7 Q8 7 7 11 Z" fill="#e0102a"/><path d="M20 13 Q19 20 12 20 Q8 20 6 17 L4 20 L3 12 L10 13 L8 15 Q10 17 12 17 Q16 17 17 13 Z" fill="#e0102a"/></svg>
<svg class="a" style="left:582.0px;top:132.0px" width="24" height="24" viewBox="0 0 24 24"><path d="M2 13 Q1.5 5 10 3 Q18 1.5 22 7 L18.5 11.5 Q16.5 7 11 7.5 Q6 8.5 6.5 13.5 Q7 17 9.5 19.5 L7.5 22.5 Q2 19 2 13 Z" fill="#7a7a7a" stroke="#111" stroke-width="1.2" stroke-linejoin="round"/><path d="M4.5 12.5 Q5 6.5 11 5.5 Q16 5 19 8 L17 10 Q14.5 7.5 11 8.5 Q7 9.5 7.5 14 L9 17.5 Z" fill="#c8202c"/><path d="M9 14 L17 13 L13 19.5 Z" fill="#c8202c" stroke="#300" stroke-width="0.6"/></svg>
<svg class="a" style="left:614.0px;top:132.0px" width="24" height="24" viewBox="0 0 24 24"><rect x="1.5" y="0.8" width="22" height="21.8" fill="none" stroke="#f08090" stroke-width="1"/><rect x="1.5" y="6.2" width="17.4" height="16.4" fill="#9c9a88" stroke="#333" stroke-width="1"/><path d="M10 12.5 L16 6.5 L13.5 4.5 L23.8 0.5 L20 10.5 L18 8.5 L12 14.5 Z" fill="#e8101e" stroke="#400" stroke-width="0.7"/></svg>
<svg class="a" style="left:646.0px;top:132.0px" width="24" height="24" viewBox="0 0 24 24"><path d="M1 4.8 Q16 -1 19.5 22" fill="none" stroke="#e02a40" stroke-width="1.5"/><path d="M3.3 14 Q4.5 6.5 11 6.3" fill="none" stroke="#1a2a2a" stroke-width="1.3"/><path d="M11.5 19.5 Q15.5 17 14.5 12" fill="none" stroke="#1a2a2a" stroke-width="1.3"/><path d="M9 12.5 L15.5 6.5 L13.5 4.5 L21.5 1.5 L18.5 9.5 L16.8 7.8 L11 14.5 Z" fill="#e8101e" stroke="#300" stroke-width="0.7"/></svg>
<div class="a" style="left:675px;top:127px;width:1px;height:34px;background:#d0d0d0"></div>
<div class="a" style="left:680px;top:129px;width:2px;height:31px;background:repeating-linear-gradient(#bdbdbd 0 2px,transparent 2px 4px)"></div>
<svg class="a" style="left:690.0px;top:132.0px" width="24" height="24" viewBox="0 0 24 24"><path d="M1.5 19.5 L9.5 12.5 L11.5 15 L3.5 22 Z" fill="#e8e020" stroke="#111" stroke-width="1"/><path d="M1.5 19.5 L3.5 22" stroke="#111" stroke-width="2"/><path d="M9 9 Q9.5 3 15 1.5 L19.5 1.5 Q22 3.5 21.5 8 Q20 14 14 16 L10.5 15.5 Q8.5 13 9 9 Z" fill="#c8c8b8" stroke="#111" stroke-width="1.3"/><ellipse cx="15.5" cy="8.5" rx="3.2" ry="5" fill="#f0e818" transform="rotate(35 15.5 8.5)"/></svg>
<svg class="a" style="left:722.0px;top:132.0px" width="24" height="24" viewBox="0 0 24 24"><g stroke="#222" stroke-width="1" fill="none"><path d="M4 14 L14 4 M10 2 L22 14 M2 12 L12 22 M2 14 L8 14 M12 4 L16 4"/><path d="M6 4 Q8 2 9 5 L7 6"/></g><circle cx="14" cy="4" r="1.5" fill="#222"/><circle cx="4" cy="14" r="1.5" fill="#222"/><circle cx="20" cy="13" r="1" fill="#444"/><circle cx="12" cy="22" r="1" fill="#444"/></svg>
<svg class="a" style="left:754.0px;top:132.0px" width="24" height="24" viewBox="0 0 24 24"><path d="M2 19 L4 21 L22 6 Q18 0 9 4 Q2 8 2 19 Z" fill="#e8d020" stroke="#333" stroke-width="1"/><path d="M6 17 Q6 10 11 7 Q15 5 18 7 Z" fill="#f5f0b0" stroke="#555" stroke-width="0.8"/></svg>
<svg class="a" style="left:786.0px;top:132.0px" width="24" height="24" viewBox="0 0 24 24"><rect x="9" y="3" width="13" height="11" fill="#fff" stroke="#444" stroke-width="1.2"/><text x="15.5" y="12" font-size="8" font-family="Liberation Serif" text-anchor="middle" fill="#222">A1</text><path d="M9 9 L4 9 L4 20" fill="none" stroke="#222" stroke-width="1"/><path d="M2 17 L4 22 L6 17 Z" fill="#222"/></svg>
<svg class="a" style="left:818.0px;top:132.0px" width="24" height="24" viewBox="0 0 24 24"><path d="M12 13 L12 2" stroke="#1e5ac8" stroke-width="1.6"/><path d="M10 6 L12 1 L14 6Z" fill="#1e5ac8"/><path d="M12 13 L20 9" stroke="#30a030" stroke-width="1.5"/><path d="M18 7 L22 8 L19 11Z" fill="#30a030"/><path d="M12 13 L20 19" stroke="#d02020" stroke-width="1.5"/><path d="M18 21 L22 21 L20 17Z" fill="#d02020"/><path d="M12 13 L4 9" stroke="#30a030" stroke-width="0.8" stroke-dasharray="1 1"/><path d="M12 13 L4 17" stroke="#d02020" stroke-width="0.8" stroke-dasharray="1 1"/><path d="M12 13 L12 22" stroke="#1e5ac8" stroke-width="0.8" stroke-dasharray="1 1"/><circle cx="12" cy="13" r="1.8" fill="#111"/></svg>
<svg class="a" style="left:850.0px;top:132.0px" width="24" height="24" viewBox="0 0 24 24"><path d="M3 19 L9.5 1.5 L13 1.5 L20 19.5 L22.5 22.5 L16 22.5 L14.5 17.5 L8.5 17.5 L7 21.5 L4 21.5 Z" fill="#707068" stroke="#111" stroke-width="1.1" stroke-linejoin="round"/><path d="M9.5 13.5 L11.5 7 L13.5 13.5 Z" fill="#f0f0f0" stroke="#111" stroke-width="0.8"/><path d="M6 18 L11 3 M15 4 L20.5 20" stroke="#a8a8a0" stroke-width="1"/></svg>
<div class="a" style="left:879px;top:127px;width:1px;height:34px;background:#d0d0d0"></div>
<div class="a" style="left:883px;top:129px;width:2px;height:31px;background:repeating-linear-gradient(#bdbdbd 0 2px,transparent 2px 4px)"></div>
<svg class="a" style="left:894.0px;top:132.0px" width="24" height="24" viewBox="0 0 24 24"><path d="M2.5 10 Q3 5.5 9 5 L9.5 3 L12 7 L9 10 L9 8 Q5.5 8.5 5.5 11 Q6 15 12 15.5 L12 20 Q3 19 2.5 13 Z" fill="#d0182e" stroke="#6a0a10" stroke-width="0.5"/><path d="M12 5 Q21 5 22 11 Q22 16.5 15 17 L15 19.5 L11.5 15 L15 12 L15 14 Q19 13.5 19 11 Q18.5 8 12 8 Z" fill="#3ca85a" stroke="#14501e" stroke-width="0.5"/><path d="M12 1 L12 23" stroke="#111" stroke-width="1.6"/><path d="M5 9 Q8 7.5 10 8.5" stroke="#f4c0c0" stroke-width="1" fill="none"/></svg>
<svg class="a" style="left:926.0px;top:132.0px" width="24" height="24" viewBox="0 0 24 24"><path d="M2 21 Q3 14 8 9 L14 3.5 Q16 2 17.5 3.5 L14.5 7 L19 3 Q21 2.5 21.5 4.5 L16.5 9 L21 6.5 Q23 6.5 22.5 8.5 L17.5 12.5 Q20.5 12 21 14 L15.5 17.5 Q11 21 6 22.5 Z" fill="#f4e4b4" stroke="#3a3a3a" stroke-width="0.9"/></svg>
<svg class="a" style="left:958.0px;top:132.0px" width="24" height="24" viewBox="0 0 24 24"><circle cx="14" cy="9" r="6.5" fill="#9ac0e8" stroke="#222" stroke-width="2"/><path d="M9.5 13.5 L3 20" stroke="#222" stroke-width="3.2" stroke-linecap="round"/></svg>
<svg class="a" style="left:990.0px;top:132.0px" width="24" height="24" viewBox="0 0 24 24"><rect x="2" y="2" width="20" height="20" fill="none" stroke="#e03040" stroke-width="1.5"/><circle cx="14" cy="9" r="6" fill="#9ac0e8" stroke="#222" stroke-width="2"/><path d="M9.5 13.5 L3 20" stroke="#222" stroke-width="3" stroke-linecap="round"/></svg>
<svg class="a" style="left:1022.0px;top:132.0px" width="24" height="24" viewBox="0 0 24 24"><circle cx="12" cy="12" r="5" fill="#9ac0e8" stroke="#222" stroke-width="1.8"/><path d="M8.5 15.5 L4 20" stroke="#222" stroke-width="2.6" stroke-linecap="round"/><path d="M1 1 L7 2 L5 4 L8 7 L7 8 L4 5 L2 7 Z M23 1 L22 7 L20 5 L17 8 L16 7 L19 4 L17 2 Z M23 23 L17 22 L19 20 L16 17 L17 16 L20 19 L22 17 Z" fill="#d01020"/></svg>
<svg class="a" style="left:1054.0px;top:132.0px" width="24" height="24" viewBox="0 0 24 24"><path d="M3 10 Q3 3 10 2.5 L9.5 0.5 L14 3.5 L10 7 L10 5 Q6 5.5 6 10 Q6.5 13 9 14 L8 17 Q3 15 3 10 Z" fill="#b4b4b4" stroke="#9a9a9a" stroke-width="0.6"/><path d="M9 6 Q15 4 17.5 9 Q18.5 12 17 14" fill="none" stroke="#bdbdbd" stroke-width="3"/><path d="M10 11 L10 21 L12.5 18.5 L15.5 23 L18 21.5 L15 17 L18.5 16.5 Z" fill="#a8a8a8" stroke="#909090" stroke-width="0.6"/></svg>
<svg class="a" style="left:1086.0px;top:132.0px" width="24" height="24" viewBox="0 0 24 24"><ellipse cx="12" cy="3" rx="1.6" ry="2" fill="#fff" stroke="#111" stroke-width="1"/><path d="M10 6 Q12 5 14 6 Q15.5 10 15 13 L15.5 13.5 L14.5 18 Q12 20 9.5 18 L8.5 13.5 L9 13 Q8.5 10 10 6 Z" fill="#fff" stroke="#111" stroke-width="1"/><path d="M8 23 L16 18.5 M8 18.5 L16 23" stroke="#d82040" stroke-width="1.1"/></svg>
<svg class="a" style="left:1118.0px;top:132.0px" width="24" height="24" viewBox="0 0 24 24"><path d="M1.5 11 Q12 1 22.5 9.5" fill="none" stroke="#111" stroke-width="1.8"/><path d="M1.5 12 Q12 3.5 21 10 Q14 20 3 14 Z" fill="#fff" stroke="#333" stroke-width="0.8"/><circle cx="10.5" cy="11" r="4.2" fill="#222"/><circle cx="10" cy="10" r="1.1" fill="#fff"/><path d="M15 8 Q19 9 20 11 M4 16 Q10 20 17 15" fill="none" stroke="#999" stroke-width="0.8"/></svg>
<svg class="a" style="left:1150.0px;top:132.0px" width="24" height="24" viewBox="0 0 24 24"><path d="M2.5 8 Q2.5 1.5 6 1.5 Q9.5 1.5 9.5 8 Q9.5 11 8.5 13 L8.5 18 Q8 22.5 5.5 22.5 Q3 22.5 3 18 L3 13 Q2.5 11 2.5 8 Z" fill="#1a1a1a"/><path d="M3 14 L9 14 M3 15.8 L9 15.8" stroke="#ddd" stroke-width="0.7"/><path d="M13 10 Q14 2.5 18.5 2 Q22.5 2.5 21 9 Q20 12 18.5 13.5 L17 17 Q15.5 20 13.5 19 Q11.5 18 12.5 14.5 Z" fill="#1a1a1a"/><path d="M13 12.5 L19.5 14 M12.5 14.3 L19 15.8" stroke="#ddd" stroke-width="0.7"/></svg>
<div class="a" style="left:1179px;top:127px;width:1px;height:34px;background:#d0d0d0"></div>
<div class="a" style="left:1184px;top:129px;width:2px;height:31px;background:repeating-linear-gradient(#bdbdbd 0 2px,transparent 2px 4px)"></div>
<div class="a" style="left:1255px;top:128px;width:31px;height:31px;background:#c8e2f8;border:1px solid #9fcdf3"></div>
<svg class="a" style="left:1194.0px;top:132.0px" width="24" height="24" viewBox="0 0 24 24"><circle cx="12" cy="11.5" r="6.5" fill="#fff" stroke="#111" stroke-width="1.1"/><path d="M2 11.5 L22 11.5" stroke="#111" stroke-width="1.6"/><path d="M12 2 L21.5 11.5 L12 21" fill="none" stroke="#111" stroke-width="1.8"/><path d="M11 1 L15 5 L11 6.5Z M11 22 L15 18 L11 16.5Z" fill="#111"/><text x="12" y="9.5" font-size="4.5" text-anchor="middle" font-family="Liberation Sans" fill="#222">C1</text><text x="12" y="16.5" font-size="4" text-anchor="middle" font-family="Liberation Sans" fill="#222">8-9</text></svg>
<svg class="a" style="left:1226.0px;top:132.0px" width="24" height="24" viewBox="0 0 24 24"><path d="M4 1 L18.7 2.8 L17.6 21.5 L5 16.8 Z" fill="#e8a8c0" stroke="#d06080" stroke-width="1"/><path d="M5 10 L10 4.5 L15 10 L15 19 L5 15.5 Z" fill="#3a82c4" stroke="#0c2a50" stroke-width="1.2"/><path d="M10 4.5 L18 7.5 L22 13 L15 10 Z" fill="#8a9aa0" stroke="#0c2a50" stroke-width="1"/><path d="M15 10 L21 13 L21 20 L15 19 Z" fill="#f4f4f4" stroke="#0c2a50" stroke-width="1"/><path d="M17 15 L19 16 L19 19 L17 18.5Z" fill="#888"/><path d="M18 2 L19.5 2 L19.5 8 L18 7.5Z" fill="#555"/></svg>
<svg class="a" style="left:1258.0px;top:132.0px" width="24" height="24" viewBox="0 0 24 24"><path d="M3 11 L9.5 5 L15 10.5 L15 20.5 L4 17 Z" fill="#4a88c8" stroke="#0a2c5a" stroke-width="1.2"/><path d="M6.5 12 L9.5 9 L12.5 12 L12.5 17.5 L6.5 15.5 Z" fill="#a4a49a"/><path d="M9.5 5 L18 7.5 L22 12.5 L15 10.5 Z" fill="#9a9a88" stroke="#0a2c5a" stroke-width="1"/><path d="M15 10.5 L21 12.5 L21 19 L15 20.5 Z" fill="#fff" stroke="#0a2c5a" stroke-width="1"/><path d="M16 2 L19.5 2 L19.5 8.5 L16 7.5 Z" fill="#fff" stroke="#111" stroke-width="1"/></svg>
<div class="a" style="left:1288px;top:127px;width:1px;height:34px;background:#d0d0d0"></div>
<div class="a" style="left:1512px;top:135px;width:200px;height:21px;background:#e6edf4"></div>
<div class="a" style="left:1512px;top:135px;width:20px;height:21px;background:#dde6ef"></div>
<div class="a" style="left:1519px;top:142px;width:7px;height:7px;border-radius:50%;background:#d0dae4"></div>
<div class="t" style="left:1545px;top:138px;font-size:15px;color:#c8d2dc">Window Snip</div>
<div class="a" style="left:3px;top:166px;width:63px;height:2px;background:repeating-linear-gradient(90deg,#bdbdbd 0 2px,transparent 2px 4px)"></div>
<div class="a" style="left:2px;top:172px;width:32px;height:31px;background:#c8e2f8;border:1px solid #9fcdf3"></div>
<svg class="a" style="left:6.0px;top:176.0px" width="24" height="24" viewBox="0 0 24 24"><path d="M8 4 L8 19 L11.5 15.5 L14 21 L16.2 20 L13.7 14.6 L18.5 14.5 Z" fill="#111" stroke="#fff" stroke-width="1"/></svg>
<svg class="a" style="left:38.0px;top:176.0px" width="24" height="24" viewBox="0 0 24 24"><g fill="none" stroke="#9a9a9a" stroke-width="1.2" stroke-linejoin="round"><path d="M2 7 L13 2 L22 6 L21 16 L10 22 L3 17 Z"/><path d="M2 7 L11 12 L22 6 M11 12 L10 22"/><path d="M5 6 L14 10.5 L14 19 M8 4 L17 8.5 L17 17.5 M3.5 11 L11 15.5 L21.5 10 M4 14 L10.5 18.5"/></g><path d="M12 13 L20 9 L19.5 14 L11.5 18.5 Z" fill="#d8d8d8" opacity="0.7"/></svg>
<svg class="a" style="left:6.0px;top:208.0px" width="24" height="24" viewBox="0 0 24 24"><path d="M12 1 Q4 3 2.7 9.3 L8 16.7 Q11 20.5 13.7 20.7 Q21 19 21.7 13.3 L14.3 2.3 Z" fill="#5a5a58" stroke="#1a1a1a" stroke-width="1.2"/><path d="M3.7 7.5 Q8 2.5 13.7 2.7 L15.7 9.3 Q10 9 5.3 11 Z" fill="#8aa0b8"/><path d="M8.7 16 L17 12.7 L18.3 18.7 Q14 21 11 19 Z" fill="#e4dcae"/><path d="M16.5 4.5 Q22 4 21 9.5" fill="none" stroke="#1a1a1a" stroke-width="1.3"/><path d="M1 12 Q5 8.5 10 8.7 Q7 11 6.7 14.7 Q6 19 4 22 Q0 19 1 12 Z" fill="#f5b400" stroke="#1a1a1a" stroke-width="1"/></svg>
<svg class="a" style="left:38.0px;top:208.0px" width="24" height="24" viewBox="0 0 24 24"><path d="M3.3 12 L14.3 1 L23 3 L13 14.7 Z" fill="#f6b0cc" stroke="#1a1a1a" stroke-width="1.1" stroke-linejoin="round"/><path d="M3.3 12 L13 14.7 L12.3 22.7 L2 17.3 Z" fill="#f47a9c" stroke="#1a1a1a" stroke-width="1.1" stroke-linejoin="round"/><path d="M13 14.7 L23 3 L22.5 8 L12.3 22.7 Z" fill="#e87098" stroke="#1a1a1a" stroke-width="1.1" stroke-linejoin="round"/><path d="M11 10.5 L16.5 5" stroke="#8a3050" stroke-width="1.4" stroke-dasharray="1.2 0.8"/></svg>
<svg class="a" style="left:6.0px;top:247.0px" width="24" height="24" viewBox="0 0 24 24"><path d="M4 20 L6 15 L18 3 L21 6 L9 18 Z" fill="#c8202a" stroke="#333" stroke-width="1"/><path d="M4 20 L6 15 L9 18 Z" fill="#ddd" stroke="#333" stroke-width="0.8"/><path d="M4 20 L5 18.5 L5.5 19.5Z" fill="#111"/></svg>
<svg class="a" style="left:38.0px;top:247.0px" width="24" height="24" viewBox="0 0 24 24"><path d="M2 21.5 Q1.5 14 6.5 14.5 Q10 15 13 19.5 Q16 23.5 18.5 20.5 Q20 16.5 12.5 12.5 Q3.5 8.5 4.5 5 Q6.5 1.5 13 5 Q19.5 8.5 21.5 6 Q22.5 3.5 20.2 1.5" fill="none" stroke="#b01428" stroke-width="1.7"/><circle cx="2" cy="21.8" r="1.9" fill="#e0102a"/><circle cx="20.2" cy="1.8" r="1.9" fill="#e0102a"/></svg>
<svg class="a" style="left:6.0px;top:279.0px" width="24" height="24" viewBox="0 0 24 24"><rect x="4" y="4" width="16" height="16" fill="#9c9a88" stroke="#333" stroke-width="1"/><path d="M4 20 L20 4" stroke="#fff" stroke-width="2"/><path d="M4 20 L20 4" stroke="#f04050" stroke-width="1"/><circle cx="4" cy="20" r="1.6" fill="#e0102a"/><circle cx="20" cy="4" r="1.6" fill="#e0102a"/></svg>
<svg class="a" style="left:38.0px;top:279.0px" width="24" height="24" viewBox="0 0 24 24"><rect x="4" y="4" width="16" height="16" fill="#9c9a88" stroke="#333" stroke-width="1"/><path d="M4 7 Q17 7 20 20" fill="none" stroke="#fff" stroke-width="2"/><path d="M4 7 Q17 7 20 20" fill="none" stroke="#f04050" stroke-width="1"/><path d="M4 4 L4 20 L20 20" fill="none" stroke="#f04050" stroke-width="1"/><circle cx="4" cy="4" r="1.6" fill="#e0102a"/><circle cx="4" cy="7" r="1.6" fill="#e0102a"/><circle cx="4" cy="20" r="1.6" fill="#e0102a"/><circle cx="20" cy="20" r="1.6" fill="#e0102a"/></svg>
<svg class="a" style="left:6.0px;top:311.0px" width="24" height="24" viewBox="0 0 24 24"><circle cx="12" cy="12" r="10" fill="#9c9a88" stroke="#333" stroke-width="1"/><path d="M12 12 L19 5" stroke="#fff" stroke-width="2"/><path d="M12 12 L19 5" stroke="#f04050" stroke-width="1"/><circle cx="12" cy="12" r="1.5" fill="#e0102a"/><circle cx="19" cy="5" r="1.5" fill="#e0102a"/></svg>
<svg class="a" style="left:38.0px;top:311.0px" width="24" height="24" viewBox="0 0 24 24"><circle cx="12" cy="12" r="10" fill="none" stroke="#f04050" stroke-width="1"/><path d="M5 9 L12 3 L20 7 L20 16 L11 21 L4 16 Z" fill="#9c9a88" stroke="#333" stroke-width="1"/><path d="M12 12 L19 6" stroke="#f04050" stroke-width="1.2"/><circle cx="12" cy="12" r="1.5" fill="#e0102a"/><circle cx="19" cy="6" r="1.5" fill="#e0102a"/></svg>
<svg class="a" style="left:6.0px;top:343.0px" width="24" height="24" viewBox="0 0 24 24"><path d="M4 21 Q18 19 19 3" fill="none" stroke="#222" stroke-width="1.3"/><path d="M4 3 L19 3 L4 21" fill="none" stroke="#f04050" stroke-width="1.2"/><circle cx="4" cy="3" r="1.6" fill="#e0102a"/><circle cx="19" cy="3" r="1.6" fill="#e0102a"/><circle cx="4" cy="21" r="1.6" fill="#e0102a"/></svg>
<svg class="a" style="left:38.0px;top:343.0px" width="24" height="24" viewBox="0 0 24 24"><path d="M6 19 Q0 8 8 4 Q16 0 22 7" fill="none" stroke="#222" stroke-width="1.3"/><path d="M6 6 L22 7 L8 20 M6 6 L13 13" fill="none" stroke="#f04050" stroke-width="1.3"/><circle cx="6" cy="6" r="1.6" fill="#e0102a"/><circle cx="22" cy="7" r="1.6" fill="#e0102a"/><circle cx="8" cy="20" r="1.6" fill="#e0102a"/></svg>
<svg class="a" style="left:6.0px;top:376.0px" width="24" height="24" viewBox="0 0 24 24"><path d="M4 15 Q8 22 16 20 Q22 17 20 9 Q17 3 10 4" fill="none" stroke="#222" stroke-width="1.3"/><path d="M10 4 L17 19 L4 15" fill="none" stroke="#f04050" stroke-width="1.2"/><circle cx="10" cy="4" r="1.6" fill="#e0102a"/><circle cx="17" cy="19" r="1.6" fill="#e0102a"/><circle cx="4" cy="15" r="1.6" fill="#e0102a"/></svg>
<svg class="a" style="left:38.0px;top:376.0px" width="24" height="24" viewBox="0 0 24 24"><path d="M4 20 L4 4 L20 4 Q20 16 4 20 Z" fill="#9c9a88" stroke="#333" stroke-width="1"/><path d="M4 20 L20 4" stroke="#fff" stroke-width="2"/><path d="M4 20 L20 4 M4 4 L20 4 M4 4 L4 20" stroke="#f04050" stroke-width="1"/><circle cx="4" cy="4" r="1.6" fill="#e0102a"/><circle cx="20" cy="4" r="1.6" fill="#e0102a"/><circle cx="4" cy="20" r="1.6" fill="#e0102a"/></svg>
<svg class="a" style="left:6.0px;top:416.0px" width="24" height="24" viewBox="0 0 24 24"><path d="M12 1.5 L22.5 12 L12 22.5 L1.5 12 Z" fill="#e0102a" stroke="#300" stroke-width="0.8"/><rect x="6.3" y="6.3" width="3.2" height="3.2" fill="#fff"/><rect x="14.5" y="6.3" width="3.2" height="3.2" fill="#fff"/><rect x="6.3" y="14.5" width="3.2" height="3.2" fill="#fff"/><rect x="14.5" y="14.5" width="3.2" height="3.2" fill="#fff"/><path d="M12 4 L12 20 M4 12 L20 12" stroke="#b00010" stroke-width="2.6"/><circle cx="12" cy="12" r="1.3" fill="#fff"/></svg>
<svg class="a" style="left:38.0px;top:416.0px" width="24" height="24" viewBox="0 0 24 24"><path d="M1 15 L13 9 L23 15 L11 21 Z" fill="#9c9c8c" stroke="#222" stroke-width="0.9"/><path d="M1 15 L1 17 L11 23 L23 17 L23 15 L11 21 Z" fill="#6a6a60" stroke="#222" stroke-width="0.7"/><path d="M12 2 L15.5 9 L13.8 9 L13.8 15 L10.2 15 L10.2 9 L8.5 9 Z" fill="#e0102a" stroke="#600" stroke-width="0.5"/></svg>
<svg class="a" style="left:6.0px;top:448.0px" width="24" height="24" viewBox="0 0 24 24"><path d="M4 11 Q5 4 12 4 Q16 4 18 7 L20 4 L21 12 L14 11 L16 9 Q14 7 12 7 Q8 7 7 11 Z" fill="#e0102a"/><path d="M20 13 Q19 20 12 20 Q8 20 6 17 L4 20 L3 12 L10 13 L8 15 Q10 17 12 17 Q16 17 17 13 Z" fill="#e0102a"/></svg>
<svg class="a" style="left:38.0px;top:448.0px" width="24" height="24" viewBox="0 0 24 24"><path d="M2 13 Q1.5 5 10 3 Q18 1.5 22 7 L18.5 11.5 Q16.5 7 11 7.5 Q6 8.5 6.5 13.5 Q7 17 9.5 19.5 L7.5 22.5 Q2 19 2 13 Z" fill="#7a7a7a" stroke="#111" stroke-width="1.2" stroke-linejoin="round"/><path d="M4.5 12.5 Q5 6.5 11 5.5 Q16 5 19 8 L17 10 Q14.5 7.5 11 8.5 Q7 9.5 7.5 14 L9 17.5 Z" fill="#c8202c"/><path d="M9 14 L17 13 L13 19.5 Z" fill="#c8202c" stroke="#300" stroke-width="0.6"/></svg>
<svg class="a" style="left:6.0px;top:480.0px" width="24" height="24" viewBox="0 0 24 24"><rect x="1.5" y="0.8" width="22" height="21.8" fill="none" stroke="#f08090" stroke-width="1"/><rect x="1.5" y="6.2" width="17.4" height="16.4" fill="#9c9a88" stroke="#333" stroke-width="1"/><path d="M10 12.5 L16 6.5 L13.5 4.5 L23.8 0.5 L20 10.5 L18 8.5 L12 14.5 Z" fill="#e8101e" stroke="#400" stroke-width="0.7"/></svg>
<svg class="a" style="left:38.0px;top:480.0px" width="24" height="24" viewBox="0 0 24 24"><path d="M1 4.8 Q16 -1 19.5 22" fill="none" stroke="#e02a40" stroke-width="1.5"/><path d="M3.3 14 Q4.5 6.5 11 6.3" fill="none" stroke="#1a2a2a" stroke-width="1.3"/><path d="M11.5 19.5 Q15.5 17 14.5 12" fill="none" stroke="#1a2a2a" stroke-width="1.3"/><path d="M9 12.5 L15.5 6.5 L13.5 4.5 L21.5 1.5 L18.5 9.5 L16.8 7.8 L11 14.5 Z" fill="#e8101e" stroke="#300" stroke-width="0.7"/></svg>
<svg class="a" style="left:6.0px;top:519.0px" width="24" height="24" viewBox="0 0 24 24"><path d="M1.5 19.5 L9.5 12.5 L11.5 15 L3.5 22 Z" fill="#e8e020" stroke="#111" stroke-width="1"/><path d="M1.5 19.5 L3.5 22" stroke="#111" stroke-width="2"/><path d="M9 9 Q9.5 3 15 1.5 L19.5 1.5 Q22 3.5 21.5 8 Q20 14 14 16 L10.5 15.5 Q8.5 13 9 9 Z" fill="#c8c8b8" stroke="#111" stroke-width="1.3"/><ellipse cx="15.5" cy="8.5" rx="3.2" ry="5" fill="#f0e818" transform="rotate(35 15.5 8.5)"/></svg>
<svg class="a" style="left:38.0px;top:519.0px" width="24" height="24" viewBox="0 0 24 24"><g stroke="#222" stroke-width="1" fill="none"><path d="M4 14 L14 4 M10 2 L22 14 M2 12 L12 22 M2 14 L8 14 M12 4 L16 4"/><path d="M6 4 Q8 2 9 5 L7 6"/></g><circle cx="14" cy="4" r="1.5" fill="#222"/><circle cx="4" cy="14" r="1.5" fill="#222"/><circle cx="20" cy="13" r="1" fill="#444"/><circle cx="12" cy="22" r="1" fill="#444"/></svg>
<svg class="a" style="left:6.0px;top:551.0px" width="24" height="24" viewBox="0 0 24 24"><path d="M2 19 L4 21 L22 6 Q18 0 9 4 Q2 8 2 19 Z" fill="#e8d020" stroke="#333" stroke-width="1"/><path d="M6 17 Q6 10 11 7 Q15 5 18 7 Z" fill="#f5f0b0" stroke="#555" stroke-width="0.8"/></svg>
<svg class="a" style="left:38.0px;top:551.0px" width="24" height="24" viewBox="0 0 24 24"><rect x="9" y="3" width="13" height="11" fill="#fff" stroke="#444" stroke-width="1.2"/><text x="15.5" y="12" font-size="8" font-family="Liberation Serif" text-anchor="middle" fill="#222">A1</text><path d="M9 9 L4 9 L4 20" fill="none" stroke="#222" stroke-width="1"/><path d="M2 17 L4 22 L6 17 Z" fill="#222"/></svg>
<svg class="a" style="left:6.0px;top:584.0px" width="24" height="24" viewBox="0 0 24 24"><path d="M12 13 L12 2" stroke="#1e5ac8" stroke-width="1.6"/><path d="M10 6 L12 1 L14 6Z" fill="#1e5ac8"/><path d="M12 13 L20 9" stroke="#30a030" stroke-width="1.5"/><path d="M18 7 L22 8 L19 11Z" fill="#30a030"/><path d="M12 13 L20 19" stroke="#d02020" stroke-width="1.5"/><path d="M18 21 L22 21 L20 17Z" fill="#d02020"/><path d="M12 13 L4 9" stroke="#30a030" stroke-width="0.8" stroke-dasharray="1 1"/><path d="M12 13 L4 17" stroke="#d02020" stroke-width="0.8" stroke-dasharray="1 1"/><path d="M12 13 L12 22" stroke="#1e5ac8" stroke-width="0.8" stroke-dasharray="1 1"/><circle cx="12" cy="13" r="1.8" fill="#111"/></svg>
<svg class="a" style="left:38.0px;top:584.0px" width="24" height="24" viewBox="0 0 24 24"><path d="M3 19 L9.5 1.5 L13 1.5 L20 19.5 L22.5 22.5 L16 22.5 L14.5 17.5 L8.5 17.5 L7 21.5 L4 21.5 Z" fill="#707068" stroke="#111" stroke-width="1.1" stroke-linejoin="round"/><path d="M9.5 13.5 L11.5 7 L13.5 13.5 Z" fill="#f0f0f0" stroke="#111" stroke-width="0.8"/><path d="M6 18 L11 3 M15 4 L20.5 20" stroke="#a8a8a0" stroke-width="1"/></svg>
<svg class="a" style="left:6.0px;top:623.0px" width="24" height="24" viewBox="0 0 24 24"><path d="M2.5 10 Q3 5.5 9 5 L9.5 3 L12 7 L9 10 L9 8 Q5.5 8.5 5.5 11 Q6 15 12 15.5 L12 20 Q3 19 2.5 13 Z" fill="#d0182e" stroke="#6a0a10" stroke-width="0.5"/><path d="M12 5 Q21 5 22 11 Q22 16.5 15 17 L15 19.5 L11.5 15 L15 12 L15 14 Q19 13.5 19 11 Q18.5 8 12 8 Z" fill="#3ca85a" stroke="#14501e" stroke-width="0.5"/><path d="M12 1 L12 23" stroke="#111" stroke-width="1.6"/><path d="M5 9 Q8 7.5 10 8.5" stroke="#f4c0c0" stroke-width="1" fill="none"/></svg>
<svg class="a" style="left:38.0px;top:623.0px" width="24" height="24" viewBox="0 0 24 24"><path d="M2 21 Q3 14 8 9 L14 3.5 Q16 2 17.5 3.5 L14.5 7 L19 3 Q21 2.5 21.5 4.5 L16.5 9 L21 6.5 Q23 6.5 22.5 8.5 L17.5 12.5 Q20.5 12 21 14 L15.5 17.5 Q11 21 6 22.5 Z" fill="#f4e4b4" stroke="#3a3a3a" stroke-width="0.9"/></svg>
<svg class="a" style="left:6.0px;top:656.0px" width="24" height="24" viewBox="0 0 24 24"><circle cx="14" cy="9" r="6.5" fill="#9ac0e8" stroke="#222" stroke-width="2"/><path d="M9.5 13.5 L3 20" stroke="#222" stroke-width="3.2" stroke-linecap="round"/></svg>
<svg class="a" style="left:38.0px;top:656.0px" width="24" height="24" viewBox="0 0 24 24"><rect x="2" y="2" width="20" height="20" fill="none" stroke="#e03040" stroke-width="1.5"/><circle cx="14" cy="9" r="6" fill="#9ac0e8" stroke="#222" stroke-width="2"/><path d="M9.5 13.5 L3 20" stroke="#222" stroke-width="3" stroke-linecap="round"/></svg>
<svg class="a" style="left:6.0px;top:688.0px" width="24" height="24" viewBox="0 0 24 24"><circle cx="12" cy="12" r="5" fill="#9ac0e8" stroke="#222" stroke-width="1.8"/><path d="M8.5 15.5 L4 20" stroke="#222" stroke-width="2.6" stroke-linecap="round"/><path d="M1 1 L7 2 L5 4 L8 7 L7 8 L4 5 L2 7 Z M23 1 L22 7 L20 5 L17 8 L16 7 L19 4 L17 2 Z M23 23 L17 22 L19 20 L16 17 L17 16 L20 19 L22 17 Z" fill="#d01020"/></svg>
<svg class="a" style="left:38.0px;top:688.0px" width="24" height="24" viewBox="0 0 24 24"><path d="M3 10 Q3 3 10 2.5 L9.5 0.5 L14 3.5 L10 7 L10 5 Q6 5.5 6 10 Q6.5 13 9 14 L8 17 Q3 15 3 10 Z" fill="#b4b4b4" stroke="#9a9a9a" stroke-width="0.6"/><path d="M9 6 Q15 4 17.5 9 Q18.5 12 17 14" fill="none" stroke="#bdbdbd" stroke-width="3"/><path d="M10 11 L10 21 L12.5 18.5 L15.5 23 L18 21.5 L15 17 L18.5 16.5 Z" fill="#a8a8a8" stroke="#909090" stroke-width="0.6"/></svg>
<svg class="a" style="left:6.0px;top:727.0px" width="24" height="24" viewBox="0 0 24 24"><ellipse cx="12" cy="3" rx="1.6" ry="2" fill="#fff" stroke="#111" stroke-width="1"/><path d="M10 6 Q12 5 14 6 Q15.5 10 15 13 L15.5 13.5 L14.5 18 Q12 20 9.5 18 L8.5 13.5 L9 13 Q8.5 10 10 6 Z" fill="#fff" stroke="#111" stroke-width="1"/><path d="M8 23 L16 18.5 M8 18.5 L16 23" stroke="#d82040" stroke-width="1.1"/></svg>
<svg class="a" style="left:38.0px;top:727.0px" width="24" height="24" viewBox="0 0 24 24"><path d="M1.5 11 Q12 1 22.5 9.5" fill="none" stroke="#111" stroke-width="1.8"/><path d="M1.5 12 Q12 3.5 21 10 Q14 20 3 14 Z" fill="#fff" stroke="#333" stroke-width="0.8"/><circle cx="10.5" cy="11" r="4.2" fill="#222"/><circle cx="10" cy="10" r="1.1" fill="#fff"/><path d="M15 8 Q19 9 20 11 M4 16 Q10 20 17 15" fill="none" stroke="#999" stroke-width="0.8"/></svg>
<svg class="a" style="left:6.0px;top:759.0px" width="24" height="24" viewBox="0 0 24 24"><path d="M2.5 8 Q2.5 1.5 6 1.5 Q9.5 1.5 9.5 8 Q9.5 11 8.5 13 L8.5 18 Q8 22.5 5.5 22.5 Q3 22.5 3 18 L3 13 Q2.5 11 2.5 8 Z" fill="#1a1a1a"/><path d="M3 14 L9 14 M3 15.8 L9 15.8" stroke="#ddd" stroke-width="0.7"/><path d="M13 10 Q14 2.5 18.5 2 Q22.5 2.5 21 9 Q20 12 18.5 13.5 L17 17 Q15.5 20 13.5 19 Q11.5 18 12.5 14.5 Z" fill="#1a1a1a"/><path d="M13 12.5 L19.5 14 M12.5 14.3 L19 15.8" stroke="#ddd" stroke-width="0.7"/></svg>
<svg class="a" style="left:38.0px;top:759.0px" width="24" height="24" viewBox="0 0 24 24"><circle cx="12" cy="11.5" r="6.5" fill="#fff" stroke="#111" stroke-width="1.1"/><path d="M2 11.5 L22 11.5" stroke="#111" stroke-width="1.6"/><path d="M12 2 L21.5 11.5 L12 21" fill="none" stroke="#111" stroke-width="1.8"/><path d="M11 1 L15 5 L11 6.5Z M11 22 L15 18 L11 16.5Z" fill="#111"/><text x="12" y="9.5" font-size="4.5" text-anchor="middle" font-family="Liberation Sans" fill="#222">C1</text><text x="12" y="16.5" font-size="4" text-anchor="middle" font-family="Liberation Sans" fill="#222">8-9</text></svg>
<div class="a" style="left:4px;top:238px;width:60px;height:1px;background:#a0a0a0"></div>
<div class="a" style="left:4px;top:406px;width:60px;height:1px;background:#a0a0a0"></div>
<div class="a" style="left:4px;top:510px;width:60px;height:1px;background:#a0a0a0"></div>
<div class="a" style="left:4px;top:614px;width:60px;height:1px;background:#a0a0a0"></div>
<div class="a" style="left:4px;top:718px;width:60px;height:1px;background:#a0a0a0"></div>
<div class="a" style="left:0px;top:788px;width:67px;height:1px;background:#d4d4d4"></div>
<!-- viewport -->
<div class="a" style="left:67px;top:161px;width:1527px;height:847px;background:#7c868e"></div>
<div class="a" style="left:67px;top:161px;width:1px;height:847px;background:#c0c0c0"></div>
<div class="a" style="left:68px;top:161px;width:1px;height:847px;background:#a4a8ac"></div>
<div class="a" style="left:67px;top:161px;width:1527px;height:1px;background:#c4c4c4"></div>
<div class="a" style="left:0px;top:161px;width:67px;height:1px;background:#a8a8a8"></div>
<div class="a" style="left:70px;top:164px;width:1524px;height:422px;background:linear-gradient(#70c5f9,#a4d8fb 50%,#d5edfb)"></div>
<div class="a" style="left:70px;top:586px;width:1524px;height:422px;background:#9aba8d"></div>
<div class="t" style="left:74px;top:168px;font-size:16px;letter-spacing:0.7px;color:#000">Front</div>
<svg class="a" style="left:70px;top:164px" width="1524" height="844" viewBox="70 164 1524 844">
<line x1="744.5" y1="164" x2="744.5" y2="729.5" stroke="#1a1a9a" stroke-width="1.2"/>
<line x1="744.5" y1="729.5" x2="744.5" y2="1008" stroke="#222" stroke-width="1" stroke-dasharray="1.5 3"/>
<line x1="744.5" y1="729.5" x2="1594" y2="729.5" stroke="#a81818" stroke-width="1.2"/>
<line x1="70" y1="729.5" x2="744.5" y2="729.5" stroke="#222" stroke-width="1" stroke-dasharray="1.5 3"/>
<line x1="744.5" y1="729.5" x2="813" y2="619" stroke="#1aa01a" stroke-width="1.3"/>
<line x1="744.5" y1="729.5" x2="574.5" y2="1005.6" stroke="#1aa01a" stroke-width="1.1" stroke-dasharray="1.5 3.5"/>
</svg>
<svg class="a" style="left:780px;top:440px" width="110" height="290" viewBox="780 440 110 290">
<g stroke="#141414" stroke-width="1.25" stroke-linejoin="round">
<!-- pants -->
<path d="M815.5 579 L869 581 Q868.5 598 866 610 L852 653 L846 705 L826 706 L830 662 L837 626 L822 664 L820 706 L803 707 Q801 690 802 688 L806 656 L812 619 Z" fill="#8a7a5a"/>
<!-- shoes -->
<path d="M803 707 L821 706 Q823 716 821 723 L806 723 Q801 718 803 707 Z" fill="#1e1e22"/>
<path d="M826 706 L845 705 Q856 710 864 715 Q865 721 858 722 L840 720 Q829 721 826 718 Z" fill="#1e1e22"/>
<!-- arms -->
<path d="M795.6 525 Q791 536 791.7 543.7 Q791.5 548 792.7 550.5 L804.2 563 L816.7 572.5 L822.4 581.2 L832 581 L823.4 568.7 L816.7 557.2 L805.2 543.7 L812.8 531 Z" fill="#e8c080"/>
<path d="M867.5 532 L880 526.5 Q882.5 536 881.9 543.7 L881 559 L879 567 L878 573 L866.6 572 L869.5 565.8 Z" fill="#e8c080"/>
<!-- shirt -->
<path d="M822.7 489 L808 497.7 Q801 504 799.4 512 L795.6 524.5 L812.8 530.3 L816.7 543.7 L818.6 557.2 L820.5 566 L818 582 L867.5 582 L869.5 566.8 L866.6 531.3 L880 526.5 L873.3 499.6 Q866 494 858 492 L850.3 484.5 Z" fill="#2c2c46"/>
<path d="M822.7 489 L825.7 500 L843.4 506 L860.3 496.8 L850.3 484.5" fill="none" stroke-width="1.1"/>
<path d="M853.4 508.3 L866 508.3 L865.5 522 Q860 526 855 524 Z" fill="none" stroke-width="1"/>
<!-- hands -->
<path d="M822.4 568.7 Q832 571 841.6 574.5 Q841 577.5 838.7 578.3 L831 581.2 L821.5 582 Z" fill="#e8c080"/>
<path d="M858 578.3 L866.6 571.6 L878 572.5 Q877.5 578 874.3 580.2 L863.7 582 Z" fill="#e8c080"/>
<rect x="870.4" y="565.8" width="8.6" height="7.5" rx="1.5" fill="#1e1e1e" stroke="none"/>
<!-- neck & head -->
<path d="M830.5 478 L851 478 L850.3 484.5 L843.4 504.5 L825.5 488 Z" fill="#e8c080"/>
<path d="M830.3 460 Q831 457 840 456.5 Q851 457 851.8 461 L851.8 476 L849.5 483 L841 487.6 L831 481.5 L830.3 476 Z" fill="#e8c080"/>
<path d="M827.3 454.6 Q832 448 838.8 448.4 Q848 448 851 453 Q854.5 458 854.1 464.6 L852.6 473.8 L851.8 476 L851.8 461 Q849 456 840 456.5 Q832 457 830.3 461 L830.3 478.4 L826.5 474.5 Q824 470 825 466.9 Z" fill="#5c5c5a"/>
</g>
<path d="M845 601 L837 626" stroke="#141414" stroke-width="1"/>
</svg>


<!-- tray -->
<div class="a" style="left:1594px;top:161px;width:326px;height:849px;background:#f0f0f0"></div>
<div class="a" style="left:1595px;top:164px;width:1px;height:844px;background:#fafafa"></div>
<div class="a" style="left:1600px;top:162px;width:320px;height:28px;background:linear-gradient(#b9c9da,#dde7f0)"></div>
<div class="t" style="left:1604px;top:169px;font-size:14px;color:#1a1a1a">Default Tray</div>
<svg class="a" style="left:1887px;top:170px" width="10" height="11"><path d="M2 1 L8 1 L8 2 L7 2 L7 6 L9 7 L9 8 L5.6 8 L5.6 11 L4.4 11 L4.4 8 L1 8 L1 7 L3 6 L3 2 L2 2 Z" fill="#000"/><path d="M4 2.5 L4 6" stroke="#fff" stroke-width="1"/></svg>
<div class="a" style="left:1904px;top:170px;width:12px;height:12px;background:#d9393d"></div>
<svg class="a" style="left:1904px;top:170px" width="12" height="12"><path d="M3.5 3.5 L8.5 8.5 M8.5 3.5 L3.5 8.5" stroke="#fff" stroke-width="1.6"/></svg>

<!-- scrollbar -->
<div class="a" style="left:1899px;top:190px;width:21px;height:818px;background:#f7f7f7"></div>
<div class="a" style="left:1900px;top:212px;width:19px;height:21px;background:#cdcdcd"></div>
<svg class="a" style="left:1904px;top:197px" width="11" height="8"><path d="M1 6.5 L5.5 2 L10 6.5" fill="none" stroke="#555" stroke-width="1.6"/></svg>
<svg class="a" style="left:1904px;top:994px" width="11" height="8"><path d="M1 1.5 L5.5 6 L10 1.5" fill="none" stroke="#555" stroke-width="1.6"/></svg>

<div class="ph" style="top:190px"><span class="tri down"></span><span class="lbl">Entity Info</span><span class="x"></span></div>
<div class="t" style="left:1611px;top:223px;font-size:13px;letter-spacing:0.15px;font-weight:bold;color:#000">No Selection</div>
<div class="a" style="left:1602px;top:244px;width:269px;height:1px;background:#8c8c8c"></div>
<svg class="a" style="left:1878px;top:219px" width="14" height="19"><rect x="1" y="1" width="12" height="9" fill="#000"/><rect x="4" y="4" width="6" height="2" fill="#fff"/><rect x="1.5" y="10" width="11" height="8" fill="#fff" stroke="#666" stroke-width="1"/><path d="M3 15.5 L7 12 L11 15.5 Z" fill="#000"/></svg>

<div class="ph" style="top:522px"><span class="tri rt"></span><span class="lbl">Components</span><span class="x"></span></div>
<div class="ph" style="top:546px"><span class="tri rt"></span><span class="lbl">Shadows</span><span class="x"></span></div>
<div class="ph" style="top:570px"><span class="tri down"></span><span class="lbl">Instructor</span><span class="x"></span></div>
<div class="a" style="left:1600px;top:593px;width:299px;height:415px;background:#fff"></div>
<svg class="a" style="left:1884px;top:197px" width="9" height="9"><path d="M1.5 1.5 L7.5 7.5 M7.5 1.5 L1.5 7.5" stroke="#111" stroke-width="1.4"/></svg><svg class="a" style="left:1884px;top:529px" width="9" height="9"><path d="M1.5 1.5 L7.5 7.5 M7.5 1.5 L1.5 7.5" stroke="#111" stroke-width="1.4"/></svg><svg class="a" style="left:1884px;top:553px" width="9" height="9"><path d="M1.5 1.5 L7.5 7.5 M7.5 1.5 L1.5 7.5" stroke="#111" stroke-width="1.4"/></svg><svg class="a" style="left:1884px;top:577px" width="9" height="9"><path d="M1.5 1.5 L7.5 7.5 M7.5 1.5 L1.5 7.5" stroke="#111" stroke-width="1.4"/></svg>
<svg class="a" style="left:1660px;top:632px" width="172" height="106" viewBox="1660 632 172 106">
<defs><pattern id="dp" width="4" height="4" patternUnits="userSpaceOnUse"><rect x="1" y="1" width="1.2" height="1.2" fill="#333"/></pattern></defs>
<path d="M1678.4 648 L1803 639.6 L1824.7 670.7 L1824.7 703 L1816.3 704 L1815 723.5 L1773 732 L1746.7 718.7 L1696.4 727 L1668.8 704.3 L1668.8 670.7 Z" fill="url(#dp)"/>
<g fill="none" stroke-linejoin="round">
<path d="M1678.4 648 L1668.8 670.7 L1668.8 704.3 L1696.4 727" stroke="#111" stroke-width="1.6"/>
<path d="M1803 639.6 L1824.7 670.7 L1824.7 703 L1816.3 704" stroke="#111" stroke-width="1.6"/>
<path d="M1797 664.7 L1816 685 L1815 723.5" stroke="#111" stroke-width="1.5"/>
<g stroke="#2a3590" stroke-width="1.6">
<path d="M1678.4 648 L1803 639.6"/>
<path d="M1678.4 648 L1695 686.3 L1696.4 727 L1746.7 718.7 L1746.7 680.8 L1695 686.3"/>
<path d="M1746.7 680.8 L1752.7 654 L1797 664.7 L1774 690 L1746.7 680.8"/>
<path d="M1774 690 L1773 732 L1746.7 718.7"/>
<path d="M1773 732 L1815 723.5"/>
<path d="M1774 690 L1816 685"/>
<path d="M1806.7 673 L1824.7 670.7"/>
</g></g>
</svg>


<svg class="a" style="left:1687px;top:619px" width="12" height="19"><path d="M1 1 L1 15 L4.5 11.5 L7 17 L9 16 L6.6 10.8 L11 10.5 Z" fill="#111" stroke="#fff" stroke-width="1"/></svg>
<div class="t" style="left:1626px;top:790px;font-size:18px;letter-spacing:0.75px;font-weight:bold;color:#111">Select Tool</div>
<div class="ins" style="left:1629px;top:809px">Select entities to modify when using other</div>
<div class="ins" style="left:1629px;top:825px">tools or commands.</div>
<div class="insh" style="left:1627px;top:854px">Tool Operation</div>
<div class="ins" style="left:1631px;top:870px">1. Click on an entity.</div>
<div class="insh" style="left:1626px;top:898px">Modifier Keys</div>
<div class="ins" style="left:1629px;top:914px">Ctrl = Add an entity to set of selected</div>
<div class="ins" style="left:1629px;top:930px">entities</div>
<div class="ins" style="left:1629px;top:946px">Shift+Ctrl = Subtract an entity from set of</div>
<div class="ins" style="left:1629px;top:962px">selected entities</div>
<div class="ins" style="left:1629px;top:978px">Shift = Toggle whether an entity is within</div>
<div class="ins" style="left:1629px;top:994px">set of selected entities</div>

<!-- status bar -->
<div class="a" style="left:0;top:1008px;width:1920px;height:34px;background:#f0f0f0"></div>
<svg class="a" style="left:4px;top:1015px" width="22" height="22"><circle cx="11.3" cy="11.5" r="8.2" fill="#f2f2f2" stroke="#aaa" stroke-width="1.3"/><path d="M8.2 8.5 Q8.5 5 11.3 5 Q14.2 5 14.4 8.5 L11.5 16.5 Z" fill="#999"/></svg>
<svg class="a" style="left:39px;top:1015px" width="22" height="22"><circle cx="11.4" cy="11.5" r="8.2" fill="#fff" stroke="#111" stroke-width="1.9"/><circle cx="11.4" cy="6.8" r="1.2" fill="#111"/><path d="M9.6 9.2 L13.2 9.2 L12.6 12 L12.6 16.6 L10.2 16.6 L10.2 12Z" fill="#111"/></svg>
<svg class="a" style="left:74px;top:1015px" width="22" height="22"><circle cx="11.6" cy="11.5" r="8.2" fill="#fff" stroke="#111" stroke-width="1.9"/><circle cx="11.6" cy="8.3" r="3.3" fill="#111"/><path d="M5.5 17.5 L6 13.5 Q11.6 11.5 17.2 13.5 L17.7 17.5 Q11.6 22 5.5 17.5Z" fill="#111"/></svg>
<div class="a" style="left:107px;top:1019px;width:1px;height:15px;background:#999"></div>
<div class="t" style="left:118px;top:1019px;font-size:15px;letter-spacing:0.157px;color:#111">Select objects. Shift to extend select. Drag mouse to select multiple.</div>
<div class="a" style="left:1542px;top:1019px;width:1px;height:15px;background:#999"></div>
<div class="t" style="left:1553px;top:1019px;font-size:15px;letter-spacing:0.3px;color:#111">Measurements</div>
<div class="a" style="left:1665px;top:1014px;width:249px;height:24px;border:1px solid #b8c4d0;background:#f0f0f0"></div>

</body></html>
